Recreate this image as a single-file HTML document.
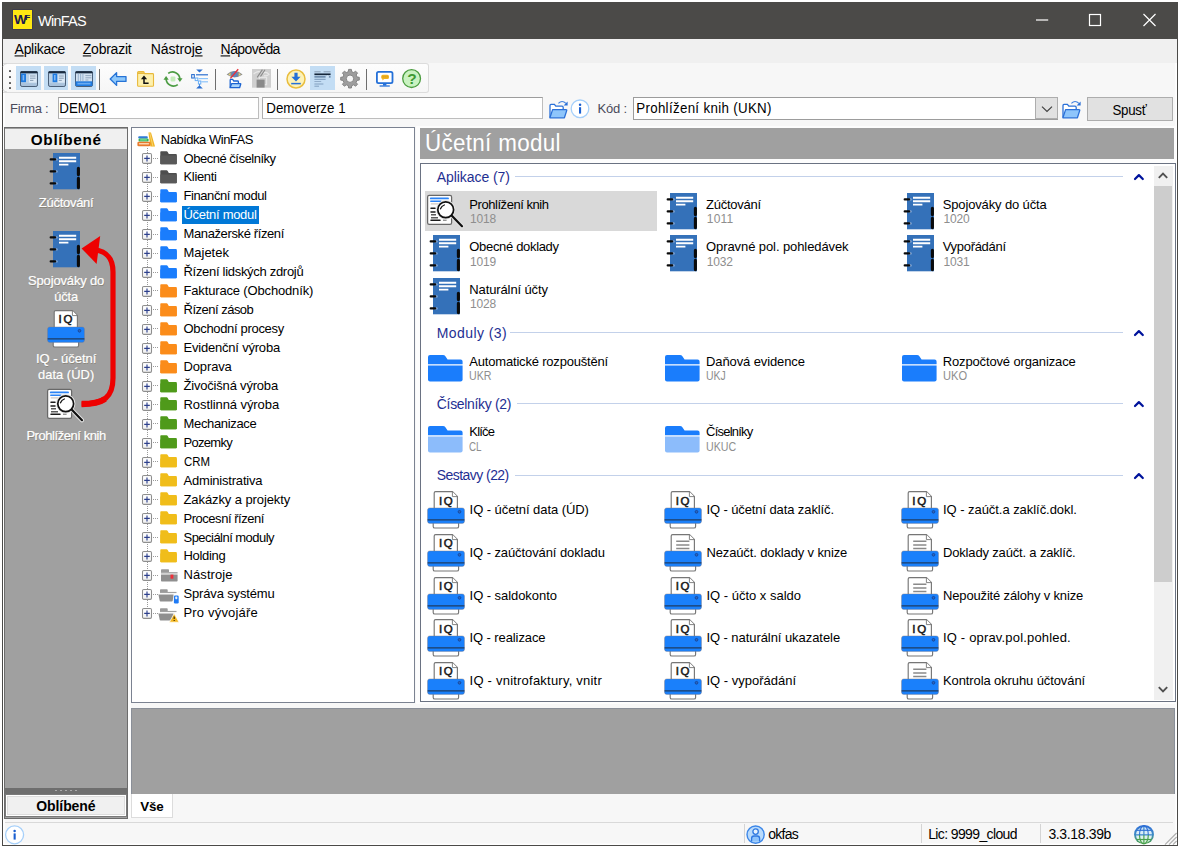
<!DOCTYPE html><html lang="cs"><head><meta charset="utf-8"><title>WinFAS</title><style>
*{box-sizing:border-box}
html,body{margin:0;padding:0}
body{width:1181px;height:849px;background:#fff;overflow:hidden;position:relative;
 font-family:"Liberation Sans",sans-serif;font-size:13px;letter-spacing:-0.35px;color:#000}
.a{position:absolute}
.t{position:absolute;white-space:nowrap;line-height:16px}
svg{position:absolute;overflow:visible}
</style></head><body>
<div class="a" style="left:2px;top:2px;width:1176px;height:844px;background:#f7f7f7;border:1.2px solid #4b4a48;box-shadow:inset 0 0 0 1.6px #fff;"></div>
<div class="a" style="left:2px;top:2px;width:1176px;height:36.5px;background:#4b4a48;"></div>
<div class="a" style="left:12.5px;top:10px;width:19.6px;height:19.4px;background:#ffe812;box-shadow:0 0 0 0.8px rgba(40,38,90,0.4);"></div>
<div class="t" style="left:13.9px;top:13.4px;font-weight:bold;font-size:13.2px;letter-spacing:-0.9px;color:#1c1a4e;line-height:15px;transform-origin:0 0;transform:scale(1.04,0.95)">W<span style="font-size:8.2px;position:relative;top:-4.7px;margin-left:-0.9px;letter-spacing:0">F</span></div>
<div class="t" style="left:38px;top:11.2px;color:#fff;font-size:14.5px;line-height:20px;letter-spacing:-0.75px">WinFAS</div>
<svg style="left:1030px;top:8px" width="140" height="24" viewBox="0 0 140 24"><g stroke="#fff" stroke-width="1.2" fill="none"><path d="M6 12h12.2"/><rect x="59.5" y="6.5" width="11" height="11"/><path d="M113.5 6l12 12M125.5 6l-12 12"/></g></svg>
<div class="a" style="left:3px;top:38.5px;width:1174px;height:24px;background:#f0f0f0;"></div>
<div class="t" style="left:14.6px;top:40.6px;font-size:14px;line-height:17px;transform:scaleY(1.07);letter-spacing:-0.304px;word-spacing:0;"><u>A</u>plikace</div>
<div class="t" style="left:82.8px;top:40.6px;font-size:14px;line-height:17px;transform:scaleY(1.07);letter-spacing:-0.240px;word-spacing:0;"><u>Z</u>obrazit</div>
<div class="t" style="left:150.8px;top:40.6px;font-size:14px;line-height:17px;transform:scaleY(1.07);letter-spacing:-0.049px;word-spacing:0;">Nástro<u>j</u><u>e</u></div>
<div class="t" style="left:220.6px;top:40.6px;font-size:14px;line-height:17px;transform:scaleY(1.07);letter-spacing:-0.577px;word-spacing:0;"><u>N</u>ápověda</div>
<div class="a" style="left:3px;top:63px;width:426px;height:29.5px;background:linear-gradient(#fdfdfd,#f6f6f6);border:1px solid #dcdcdc;border-left:none;border-radius:0 3px 3px 0;"></div>
<svg style="left:3px;top:63px" width="6" height="30" viewBox="0 0 6 30"><path d="M0 3.5Q0.5 0.5 4 0.5M0 26Q0.5 29 4 29" stroke="#d6d6d6" fill="none"/></svg>
<div class="a" style="left:9.3px;top:69.8px;width:2.2px;height:2.2px;background:#5a5a5a;border-radius:0.6px"></div>
<div class="a" style="left:9.3px;top:75.8px;width:2.2px;height:2.2px;background:#5a5a5a;border-radius:0.6px"></div>
<div class="a" style="left:9.3px;top:81.8px;width:2.2px;height:2.2px;background:#5a5a5a;border-radius:0.6px"></div>
<div class="a" style="left:9.3px;top:87.3px;width:2.2px;height:2.2px;background:#5a5a5a;border-radius:0.6px"></div>
<div class="a" style="left:16.3px;top:66px;width:24.7px;height:23.5px;background:#c3ddf4;"></div>
<div class="a" style="left:43.8px;top:66px;width:24.4px;height:23.5px;background:#c3ddf4;"></div>
<div class="a" style="left:71px;top:66px;width:24.5px;height:23.5px;background:#c3ddf4;"></div>
<div class="a" style="left:310px;top:66px;width:25px;height:23.5px;background:#c3ddf4;"></div>
<div class="a" style="left:99px;top:68.5px;width:1.1px;height:21px;background:#6e6e6e;"></div>
<div class="a" style="left:215.3px;top:68.5px;width:1.1px;height:21px;background:#6e6e6e;"></div>
<div class="a" style="left:277px;top:68.5px;width:1.1px;height:21px;background:#6e6e6e;"></div>
<div class="a" style="left:366px;top:68.5px;width:1.1px;height:21px;background:#6e6e6e;"></div>
<svg style="left:20.3px;top:71px" width="18" height="16" viewBox="0 0 18 16"><rect x="0.5" y="0.5" width="17" height="15" rx="1.6" fill="#a9c2dc" stroke="#4a5f78" stroke-width="1"/><rect x="0.4" y="0.3" width="17.2" height="2.2" rx="0.8" fill="#1b2c40"/><rect x="1" y="2.6" width="16" height="9.6" fill="#b9d0e6"/><rect x="1" y="2.6" width="5" height="8.6" fill="#1e7ae0"/><rect x="2.6" y="4" width="1.6" height="5.4" fill="#7fb6f3"/><rect x="9" y="3.6" width="7.6" height="8" fill="#dce9f6"/><path d="M10 5h5.6M10 7.2h5.6M10 9.4h3.4" stroke="#7f95ad" stroke-width="0.9"/></svg>
<svg style="left:47.5px;top:71px" width="18" height="16" viewBox="0 0 18 16"><rect x="0.5" y="0.5" width="17" height="15" rx="1.6" fill="#a9c2dc" stroke="#4a5f78" stroke-width="1"/><rect x="0.4" y="0.3" width="17.2" height="2.2" rx="0.8" fill="#1b2c40"/><rect x="1" y="2.6" width="16" height="9.6" fill="#b9d0e6"/><rect x="4.6" y="2.6" width="4.6" height="8.6" fill="#1e7ae0"/><rect x="6" y="4" width="1.6" height="5.4" fill="#7fb6f3"/><rect x="10" y="3.6" width="6.8" height="8" fill="#dce9f6"/><path d="M10.8 5h5M10.8 7.2h5M10.8 9.4h3" stroke="#7f95ad" stroke-width="0.9"/></svg>
<svg style="left:74.6px;top:71px" width="18" height="16" viewBox="0 0 18 16"><rect x="0.5" y="0.5" width="17" height="15" rx="1.6" fill="#a9c2dc" stroke="#4a5f78" stroke-width="1"/><rect x="0.4" y="0.3" width="17.2" height="2.2" rx="0.8" fill="#1b2c40"/><rect x="1" y="2.6" width="16" height="7.6" fill="#d3e2f1"/><path d="M3.3 3v7M5.6 3v7M7.9 3v7" stroke="#9cb6d2" stroke-width="1.1"/><path d="M10.4 4.6h6M10.4 6.8h6M10.4 9h3" stroke="#8aa1ba" stroke-width="0.9"/><rect x="0.6" y="10.4" width="16.8" height="4.6" fill="#1e7ae0"/><rect x="2.4" y="11.8" width="13.2" height="1.7" fill="#69aaf0"/></svg>
<svg style="left:109px;top:71px" width="19" height="16" viewBox="0 0 19 16"><path d="M1.2 8L7.6 1.6V5.6H17V10.4H7.6V14.4Z" fill="#8ec8fb" stroke="#2673d6" stroke-width="1.3" stroke-linejoin="round"/></svg>
<svg style="left:137px;top:70.5px" width="17" height="16" viewBox="0 0 17 16"><path d="M0.6 1.6Q0.6 0.6 1.6 0.6H6Q7 0.6 7.2 1.6L7.4 2.6H15.6Q16.5 2.6 16.5 3.5V14.4Q16.5 15.3 15.6 15.3H1.5Q0.6 15.3 0.6 14.4Z" fill="#fdf0ad" stroke="#e8b93c" stroke-width="1.1"/><path d="M0.6 2.2H7" stroke="#e8b93c" stroke-width="1.6"/><path d="M11.6 12.2H7V7.6" stroke="#111" stroke-width="1.5" fill="none"/><path d="M3.9 8.2L7 4.6L10.1 8.2Z" fill="#111"/></svg>
<svg style="left:163px;top:70px" width="20" height="18" viewBox="0 0 20 18"><g fill="none" stroke="#4c9c43" stroke-width="1.7"><path d="M5.2 3.4A7.4 7.4 0 0 1 16.9 9"/><path d="M14.8 14.6A7.4 7.4 0 0 1 3.1 9"/></g><path d="M14.3 8.2H19.5L16.9 12Z" fill="#4c9c43"/><path d="M0.5 9.8H5.7L3.1 6Z" fill="#4c9c43"/><rect x="7.6" y="6.6" width="4.8" height="4.8" rx="1" fill="#c5edbb"/></svg>
<svg style="left:191px;top:69px" width="18" height="20" viewBox="0 0 18 20"><path d="M5.2 0.6H11.8L8.5 3.6Z" fill="#2b6fd0"/><path d="M5.2 19.6H11.8L8.5 16.2Z" fill="#2b6fd0"/><path d="M5 5.8H17" stroke="#2b6fd0" stroke-width="1.2"/><path d="M7.6 9.6H17" stroke="#8cc4fb" stroke-width="1.2"/><path d="M10.4 12.8H17" stroke="#8cc4fb" stroke-width="1.2"/><path d="M8.5 14.6v2" stroke="#2b6fd0" stroke-width="1"/><rect x="0.7" y="5.6" width="2.6" height="3.4" fill="#fff" stroke="#2b6fd0" stroke-width="1.1"/><rect x="4.2" y="9" width="2.6" height="2.6" fill="#fff" stroke="#69aef6" stroke-width="1"/><rect x="7.4" y="12" width="2.4" height="3" fill="#fff" stroke="#69aef6" stroke-width="1"/></svg>
<svg style="left:225.5px;top:69px" width="18" height="20" viewBox="0 0 18 20"><path d="M0.6 5.4Q8.5 -1.2 16.6 5.4Q8.5 11 0.6 5.4Z" fill="#8d8d8d"/><ellipse cx="8.6" cy="5.2" rx="3.2" ry="3" fill="#5c86bd"/><path d="M2.4 5.4l2-1.6v3.2zM14.8 5.4l-2-1.6v3.2z" fill="#e7d77a"/><path d="M12.2 0.2L4.4 9.4" stroke="#e8313a" stroke-width="1.4"/><path d="M4.2 18.6V11Q4.2 10.4 4.8 10.4H6.6L7.8 12H11.6Q12.4 12 12.4 12.8V14.4" fill="#fff" stroke="#1b63d1" stroke-width="1.3"/><path d="M4.1 18.7L5.6 14.6H14.2Q14.9 14.6 14.7 15.2L13.6 18.7Z" fill="#a9d4fc" stroke="#1b63d1" stroke-width="1.3" stroke-linejoin="round"/></svg>
<svg style="left:252px;top:69.3px" width="19" height="19" viewBox="0 0 19 19"><rect width="19" height="18.7" fill="#cfcfcf"/><path d="M1.6 5Q6 1 9.4 3.6M11 4.4Q14 2 17 5.4Q14.6 7.4 12 6.6" stroke="#e9e9e9" stroke-width="1.1" fill="none"/><path d="M10.4 0.6L5.2 8.4M13 0.8L8.4 7.6" stroke="#8a8a8a" stroke-width="1.1"/><path d="M7.4 10.4V8.4H14.6V15.6H12.6" stroke="#e6e6e6" stroke-width="1.2" fill="none"/><rect x="4.6" y="10.6" width="8" height="8" fill="#8a8a8a"/></svg>
<svg style="left:285.5px;top:68.8px" width="20" height="20" viewBox="0 0 20 20"><circle cx="10" cy="10" r="9" fill="#fdf2b8" stroke="#e9bd3d" stroke-width="1.5"/><path d="M8.4 3.8H11.6V7.8H14.6L10 12.4L5.4 7.8H8.4Z" fill="#2470d8"/><path d="M5.2 14.6H14.8" stroke="#2470d8" stroke-width="1.5"/></svg>
<svg style="left:314.4px;top:71px" width="17" height="16" viewBox="0 0 17 16"><path d="M0.4 0.8H6.6M9.6 0.8H16.6" stroke="#8396ab" stroke-width="0.9"/><path d="M0.4 3.3H16.6" stroke="#14263a" stroke-width="1.7"/><path d="M0.4 5.9H11.6" stroke="#4e6e92" stroke-width="1.2"/><path d="M14.6 5.9H16.6" stroke="#4e6e92" stroke-width="1.2"/><path d="M13.2 4.6L15 6.4" stroke="#dcebf9" stroke-width="1"/><path d="M0.4 8.3H11.6" stroke="#6f8fb2" stroke-width="0.9"/><path d="M0.4 10.5H7.2" stroke="#8ba6c4" stroke-width="0.9"/><path d="M0.4 13H9.4" stroke="#7b9aba" stroke-width="0.9"/><path d="M0.4 15.2H5" stroke="#7b9aba" stroke-width="0.9"/></svg>
<svg style="left:340px;top:69px" width="20" height="20" viewBox="0 0 20 20"><path d="M8.32 2.70L8.60 0.40L11.40 0.40L11.68 2.70L13.76 3.56L15.58 2.14L17.56 4.12L16.14 5.94L17.00 8.02L19.30 8.30L19.30 11.10L17.00 11.38L16.14 13.46L17.56 15.28L15.58 17.26L13.76 15.84L11.68 16.70L11.40 19.00L8.60 19.00L8.32 16.70L6.24 15.84L4.42 17.26L2.44 15.28L3.86 13.46L3.00 11.38L0.70 11.10L0.70 8.30L3.00 8.02L3.86 5.94L2.44 4.12L4.42 2.14L6.24 3.56Z" fill="#9d9d9d" stroke="#7d7d7d" stroke-width="0.9" stroke-linejoin="round"/><circle cx="10" cy="9.7" r="3.7" fill="#f6f6f6" stroke="#7d7d7d" stroke-width="0.9"/></svg>
<svg style="left:376px;top:70.5px" width="18" height="16" viewBox="0 0 18 16"><rect x="0.9" y="0.9" width="15.6" height="11.2" rx="1.6" fill="#fff" stroke="#2470d8" stroke-width="1.8"/><rect x="7" y="12.6" width="3.4" height="2" fill="#2470d8"/><path d="M3.6 15H13.8" stroke="#2470d8" stroke-width="1.3"/><path d="M5.2 5.4Q5.2 3.8 6.8 3.8H11.4Q13 3.8 13 5.4V6.4Q13 8 11.4 8H8.2L6.4 9.6V8Q5.2 7.8 5.2 6.4Z" fill="#f0b323"/><path d="M6.6 5.9h1M8.6 5.9h1M10.6 5.9h1" stroke="#c08a10" stroke-width="0.9"/></svg>
<svg style="left:402px;top:69.4px" width="20" height="20" viewBox="0 0 20 20"><circle cx="9.6" cy="9.6" r="8.9" fill="#c9f2c1" stroke="#4a9c3e" stroke-width="1.3"/></svg>
<div class="t" style="left:407.2px;top:69.6px;font-weight:bold;font-size:15.5px;color:#3f9a33;line-height:18px;letter-spacing:0">?</div>
<div class="t" style="left:10px;top:101px;color:#4a4a5a;font-size:13px;letter-spacing:-0.3px;transform:scaleY(1.05)">Firma :</div>
<div class="a" style="left:58px;top:97px;width:201px;height:21.7px;background:#fff;border:1px solid #bdbdbd;border-top-color:#9d9d9d;border-left-color:#adadad;"></div>
<div class="a" style="left:262px;top:97px;width:281px;height:21.7px;background:#fff;border:1px solid #bdbdbd;border-top-color:#9d9d9d;border-left-color:#adadad;"></div>
<div class="a" style="left:633px;top:96.6px;width:425.4px;height:23px;background:#fff;border:1px solid #9c9c9c;"></div>
<div class="t" style="left:59.3px;top:99.9px;font-size:13.33px;letter-spacing:0;line-height:17px;transform:scaleY(1.04);">DEMO1</div>
<div class="t" style="left:266.3px;top:99.9px;font-size:13.33px;letter-spacing:0;line-height:17px;transform:scaleY(1.04);">Demoverze 1</div>
<div class="t" style="left:636.2px;top:99.9px;font-size:13.33px;letter-spacing:0;line-height:17px;transform:scaleY(1.04);letter-spacing:0.32px">Prohlížení knih (UKN)</div>
<div class="t" style="left:597.5px;top:101px;color:#4a4a5a;font-size:13px;letter-spacing:-0.2px;transform:scaleY(1.05)">Kód :</div>
<svg style="left:549px;top:99.5px" width="20" height="19" viewBox="0 0 20 19"><path d="M1 17.6V5.4Q1 4.4 2 4.4H5.4L6.8 6.2H13Q14.2 6.2 14.2 7.4V9" fill="#fff" stroke="#2a70d8" stroke-width="1.3"/><path d="M0.9 17.8L3.6 9.6H17Q18 9.6 17.7 10.6L15.4 17.8Z" fill="#8ec5fb" stroke="#2a70d8" stroke-width="1.3" stroke-linejoin="round"/><path d="M9.4 3.4Q13 -0.4 17 3.4" fill="none" stroke="#3f80de" stroke-width="1.1"/><path d="M18.6 1.4V5.6H14.6Z" fill="#2a70d8"/></svg>
<svg style="left:1062.4px;top:99.5px" width="20" height="19" viewBox="0 0 20 19"><path d="M1 17.6V5.4Q1 4.4 2 4.4H5.4L6.8 6.2H13Q14.2 6.2 14.2 7.4V9" fill="#fff" stroke="#2a70d8" stroke-width="1.3"/><path d="M0.9 17.8L3.6 9.6H17Q18 9.6 17.7 10.6L15.4 17.8Z" fill="#8ec5fb" stroke="#2a70d8" stroke-width="1.3" stroke-linejoin="round"/><path d="M9.4 3.4Q13 -0.4 17 3.4" fill="none" stroke="#3f80de" stroke-width="1.1"/><path d="M18.6 1.4V5.6H14.6Z" fill="#2a70d8"/></svg>
<svg style="left:570px;top:99.3px" width="20" height="20" viewBox="0 0 20 20"><circle cx="10" cy="9.8" r="8.8" fill="#fff" stroke="#a6d0fa" stroke-width="1.3"/><rect x="9" y="8.2" width="2.1" height="6.4" fill="#1a5fd0"/><circle cx="10.05" cy="5.7" r="1.25" fill="#1a5fd0"/></svg>
<div class="a" style="left:1035.3px;top:97.2px;width:22.5px;height:21.8px;background:#e1e1e1;border:1px solid #adadad;"></div>
<svg style="left:1039.5px;top:105px" width="14" height="9" viewBox="0 0 14 9"><path d="M2 1.6L7 6.4L12 1.6" fill="none" stroke="#404040" stroke-width="1.2"/></svg>
<div class="a" style="left:1087px;top:97px;width:86.3px;height:24.3px;background:#e1e1e1;border:1px solid #adadad;"></div>
<div class="t" style="left:1112.5px;top:101.7px;font-size:13.33px;letter-spacing:-0.3px;line-height:17px;transform:scaleY(1.05)">Spusť</div>
<div class="a" style="left:4px;top:127px;width:124px;height:691.5px;background:#a0a0a0;border:1.4px solid #6c6c6c;"></div>
<div class="a" style="left:5.4px;top:128.6px;width:121.2px;height:20.2px;background:#f0f0f0;"></div>
<div class="t" style="left:5.8px;top:129.5px;width:121px;text-align:center;font-weight:bold;font-size:15.3px;letter-spacing:0.7px;line-height:19px">Oblíbené</div>
<svg style="left:49px;top:153px" width="31" height="36.3" viewBox="0 0 31 36.3"><rect x="4" y="0" width="27" height="36.3" fill="#3471b9"/><path d="M6.4 6.4H7.6M6.4 18.4H7.6M6.4 30.4H7.6" stroke="#86a9d8" stroke-width="2.4" stroke-linecap="round"/><path d="M1.7 6.4H6.2M1.7 18.4H6.2M1.7 30.4H6.2" stroke="#0a0a0a" stroke-width="2.2" stroke-linecap="round"/><path d="M10 4.7H27.2M10 8.2H27.2M10 11.6H19.4" stroke="#fff" stroke-width="1.9"/><path d="M29.4 15.2V21.6M29.4 25.4V34.6" stroke="#0a0a0a" stroke-width="3.1" stroke-linecap="round"/></svg>
<div class="t" style="left:5.6px;top:195px;width:121px;text-align:center;color:#fff;font-size:13px;letter-spacing:-0.15px;line-height:15.1px;text-shadow:0.6px 0.8px 0 rgba(120,110,90,0.55);-webkit-text-stroke:0.22px #fff;transform:scaleY(1.05)"><span style="letter-spacing:-0.284px;word-spacing:0;">Zúčtování</span></div>
<svg style="left:49px;top:230.6px" width="31" height="36.3" viewBox="0 0 31 36.3"><rect x="4" y="0" width="27" height="36.3" fill="#3471b9"/><path d="M6.4 6.4H7.6M6.4 18.4H7.6M6.4 30.4H7.6" stroke="#86a9d8" stroke-width="2.4" stroke-linecap="round"/><path d="M1.7 6.4H6.2M1.7 18.4H6.2M1.7 30.4H6.2" stroke="#0a0a0a" stroke-width="2.2" stroke-linecap="round"/><path d="M10 4.7H27.2M10 8.2H27.2M10 11.6H19.4" stroke="#fff" stroke-width="1.9"/><path d="M29.4 15.2V21.6M29.4 25.4V34.6" stroke="#0a0a0a" stroke-width="3.1" stroke-linecap="round"/></svg>
<div class="t" style="left:5.6px;top:272.5px;width:121px;text-align:center;color:#fff;font-size:13px;letter-spacing:-0.15px;line-height:15.1px;text-shadow:0.6px 0.8px 0 rgba(120,110,90,0.55);-webkit-text-stroke:0.22px #fff;transform:scaleY(1.05)"><span style="letter-spacing:-0.156px;word-spacing:0;">Spojováky do</span><br><span style="letter-spacing:-0.247px;word-spacing:0;">účta</span></div>
<svg style="left:47px;top:309.6px" width="38" height="37.6" viewBox="0 0 38 37.6"><path d="M7.2 17.5V2Q7.2 0.6 8.6 0.6H25.4L30.4 5.6V17.5Z" fill="#fff" stroke="#767676" stroke-width="1.15"/><path d="M25.4 0.8V5.6H30.2" fill="#fff" stroke="#767676" stroke-width="0.9"/><path d="M6.2 30V35.4Q6.2 37 7.8 37H30Q31.6 37 31.6 35.4V30Z" fill="#fff" stroke="#767676" stroke-width="1.15"/><rect x="0.5" y="16.9" width="37" height="15.5" rx="2.2" fill="#1a80fb" stroke="#8a7a78" stroke-opacity="0.55" stroke-width="0.7"/><path d="M0.6 28.9H37.4" stroke="#1f3c63" stroke-width="1.1"/><circle cx="32.5" cy="20.8" r="1.35" fill="#2a66c4" stroke="#17479a" stroke-width="1"/></svg>
<div class="t" style="left:58.6px;top:312.8px;font-size:11.5px;letter-spacing:1.7px;line-height:13px;color:#1a1a1a;-webkit-text-stroke:0.55px #1a1a1a">IQ</div>
<div class="t" style="left:5.6px;top:351px;width:121px;text-align:center;color:#fff;font-size:13px;letter-spacing:-0.15px;line-height:15.1px;text-shadow:0.6px 0.8px 0 rgba(120,110,90,0.55);-webkit-text-stroke:0.22px #fff;transform:scaleY(1.05)"><span style="letter-spacing:-0.028px;word-spacing:0;">IQ - účetní</span><br><span style="letter-spacing:-0.002px;word-spacing:0;">data (ÚD)</span></div>
<svg style="left:47px;top:388.8px" width="37" height="33" viewBox="0 0 37 33"><rect x="0.6" y="0.4" width="24" height="29" rx="1.6" fill="#fdfdfd" stroke="#686868" stroke-width="1.25"/><path d="M3.8 3.4H21" stroke="#2b83f6" stroke-width="1.9" stroke-linecap="round"/><path d="M3.8 6.2H14" stroke="#2b83f6" stroke-width="1.5" stroke-linecap="round"/><path d="M3.8 8.9H12" stroke="#c9c2bb" stroke-width="1.1"/><path d="M4 13.2H8M4 17H8" stroke="#1c1c1c" stroke-width="1.5" stroke-linecap="round"/><path d="M4 19.8H9M4 22.7H11" stroke="#5a5a5a" stroke-width="1.6"/><path d="M4 25.3H13" stroke="#1c1c1c" stroke-width="1.5" stroke-linecap="round"/><path d="M16 25.2h3.6" stroke="#8a8a8a" stroke-width="1.4"/><path d="M25.4 21.4L35 31.2" stroke="#e4e4e4" stroke-width="4.2" stroke-linecap="round"/><circle cx="18.7" cy="14.7" r="7.9" fill="#fff" stroke="#e4e4e4" stroke-width="3.6"/><circle cx="18.7" cy="14.7" r="7.9" fill="#fff" stroke="#101010" stroke-width="1.7"/><path d="M13.5 13.8Q14.6 10.8 17.4 10" fill="none" stroke="#151515" stroke-width="1.3" stroke-linecap="round"/><path d="M24.6 20.6L35 31.2" stroke="#101010" stroke-width="2.2" stroke-linecap="round"/></svg>
<div class="t" style="left:5.6px;top:428px;width:121px;text-align:center;color:#fff;font-size:13px;letter-spacing:-0.15px;line-height:15.1px;text-shadow:0.6px 0.8px 0 rgba(120,110,90,0.55);-webkit-text-stroke:0.22px #fff;transform:scaleY(1.05)"><span style="letter-spacing:-0.440px;word-spacing:0;">Prohlížení knih</span></div>
<svg style="left:0;top:0" width="140" height="460" viewBox="0 0 140 460"><path d="M81.6 404C104 404 113 397 113 378V272C113 257 106 251 93 249.4" fill="none" stroke="#ee0000" stroke-width="5.2"/><path d="M81.6 404C92 404 100 402.4 105 399" fill="none" stroke="#ee0000" stroke-width="6.3"/><path d="M81.6 248.4L100.2 236L96.6 264Z" fill="#ee0000"/></svg>
<div class="a" style="left:5.4px;top:788px;width:121.2px;height:5.8px;background:#6e6e6e;"></div>
<div class="a" style="left:55.4px;top:789.8px;width:1.6px;height:1.6px;background:#a8a8a8;"></div>
<div class="a" style="left:60.4px;top:789.8px;width:1.6px;height:1.6px;background:#a8a8a8;"></div>
<div class="a" style="left:65.4px;top:789.8px;width:1.6px;height:1.6px;background:#a8a8a8;"></div>
<div class="a" style="left:70.4px;top:789.8px;width:1.6px;height:1.6px;background:#a8a8a8;"></div>
<div class="a" style="left:75.4px;top:789.8px;width:1.6px;height:1.6px;background:#a8a8a8;"></div>
<div class="a" style="left:5.4px;top:793.8px;width:121.2px;height:23.4px;background:#f0f0f0;border:1px solid #7a7a7a;box-shadow:inset 0 0 0 1px #fff, inset 0 0 0 2px #dcdcdc;"></div>
<div class="t" style="left:5.4px;top:797.6px;width:121px;text-align:center;font-weight:bold;font-size:14px;letter-spacing:-0.1px;line-height:17px">Oblíbené</div>
<div class="a" style="left:128px;top:126px;width:3px;height:692px;background:#fcfcfc;"></div>
<div class="a" style="left:131px;top:127.3px;width:284px;height:575.7px;background:#fff;border:1px solid #7b8291;"></div>
<svg style="left:137px;top:132px" width="19" height="15" viewBox="0 0 19 15"><path d="M11.4 0.4H14L18 14.4H13.4Z" fill="#f0b323"/><path d="M12.6 0.4L16 14.4" stroke="#f8d77a" stroke-width="0.9"/><rect x="1.2" y="4.2" width="9.6" height="2.4" rx="1" fill="#2f7bd6"/><rect x="1.6" y="6.4" width="10" height="3.2" rx="1.2" fill="#36b25a"/><rect x="3" y="7.3" width="7" height="1.2" rx="0.6" fill="#7fe39a"/><rect x="0.4" y="9.8" width="13" height="4.4" rx="1.3" fill="#e8792b"/><rect x="1.8" y="11" width="10.4" height="1.5" rx="0.7" fill="#fbd3ae"/></svg>
<div class="t" style="left:160.8px;top:130.6px;font-size:13px;letter-spacing:-0.38px;line-height:17px;transform:scaleY(1.05);letter-spacing:-0.486px;word-spacing:0;">Nabídka WinFAS</div>
<div class="a" style="left:147px;top:148px;width:1px;height:465.0999999999999px;background:repeating-linear-gradient(#9a9a9a 0 1px,transparent 1px 2px);"></div>
<div class="a" style="left:152.5px;top:158px;width:6.5px;height:1px;background:repeating-linear-gradient(90deg,#9a9a9a 0 1px,transparent 1px 2px);"></div>
<svg style="left:141.9px;top:153.30px" width="10" height="10.9" viewBox="0 0 10 10.4" preserveAspectRatio="none"><rect x="0.5" y="0.5" width="9" height="9.4" rx="1.3" fill="#f4f4f4" stroke="#8e8e8e" stroke-width="1.05"/><rect x="1.4" y="1.4" width="7.2" height="3.6" fill="#fdfdfd"/><path d="M2.2 5.2H7.8M5 2.4V8" stroke="#2c3f8c" stroke-width="1.15"/></svg>
<svg style="left:160.2px;top:151.10000000000002px" width="17" height="13.4" viewBox="0 0 17 13.4"><path d="M0.3 1Q0.3 0.2 1.1 0.2H6.6Q7.3 0.2 7.7 0.9L8.8 3H16Q16.8 3 16.8 3.8V12.4Q16.8 13.2 16 13.2H1.1Q0.3 13.2 0.3 12.4Z" fill="#4e4e4e"/><path d="M0.3 4.4H16.8V12.4Q16.8 13.2 16 13.2H1.1Q0.3 13.2 0.3 12.4Z" fill="#595959"/></svg>
<div class="t" style="left:183.5px;top:149.5px;font-size:13px;letter-spacing:-0.38px;line-height:17px;transform:scaleY(1.05);letter-spacing:-0.474px;word-spacing:0;">Obecné číselníky</div>
<div class="a" style="left:152.5px;top:177px;width:6.5px;height:1px;background:repeating-linear-gradient(90deg,#9a9a9a 0 1px,transparent 1px 2px);"></div>
<svg style="left:141.9px;top:172.25px" width="10" height="10.9" viewBox="0 0 10 10.4" preserveAspectRatio="none"><rect x="0.5" y="0.5" width="9" height="9.4" rx="1.3" fill="#f4f4f4" stroke="#8e8e8e" stroke-width="1.05"/><rect x="1.4" y="1.4" width="7.2" height="3.6" fill="#fdfdfd"/><path d="M2.2 5.2H7.8M5 2.4V8" stroke="#2c3f8c" stroke-width="1.15"/></svg>
<svg style="left:160.2px;top:170.05px" width="17" height="13.4" viewBox="0 0 17 13.4"><path d="M0.3 1Q0.3 0.2 1.1 0.2H6.6Q7.3 0.2 7.7 0.9L8.8 3H16Q16.8 3 16.8 3.8V12.4Q16.8 13.2 16 13.2H1.1Q0.3 13.2 0.3 12.4Z" fill="#4e4e4e"/><path d="M0.3 4.4H16.8V12.4Q16.8 13.2 16 13.2H1.1Q0.3 13.2 0.3 12.4Z" fill="#595959"/></svg>
<div class="t" style="left:183.5px;top:168.45px;font-size:13px;letter-spacing:-0.38px;line-height:17px;transform:scaleY(1.05);letter-spacing:-0.337px;word-spacing:0;">Klienti</div>
<div class="a" style="left:152.5px;top:196px;width:6.5px;height:1px;background:repeating-linear-gradient(90deg,#9a9a9a 0 1px,transparent 1px 2px);"></div>
<svg style="left:141.9px;top:191.20px" width="10" height="10.9" viewBox="0 0 10 10.4" preserveAspectRatio="none"><rect x="0.5" y="0.5" width="9" height="9.4" rx="1.3" fill="#f4f4f4" stroke="#8e8e8e" stroke-width="1.05"/><rect x="1.4" y="1.4" width="7.2" height="3.6" fill="#fdfdfd"/><path d="M2.2 5.2H7.8M5 2.4V8" stroke="#2c3f8c" stroke-width="1.15"/></svg>
<svg style="left:160.2px;top:189.00000000000003px" width="17" height="13.4" viewBox="0 0 17 13.4"><path d="M0.3 1Q0.3 0.2 1.1 0.2H6.6Q7.3 0.2 7.7 0.9L8.8 3H16Q16.8 3 16.8 3.8V12.4Q16.8 13.2 16 13.2H1.1Q0.3 13.2 0.3 12.4Z" fill="#1a7dfc"/><path d="M0.3 4.4H16.8V12.4Q16.8 13.2 16 13.2H1.1Q0.3 13.2 0.3 12.4Z" fill="#1a7dfc"/></svg>
<div class="t" style="left:183.5px;top:187.4px;font-size:13px;letter-spacing:-0.38px;line-height:17px;transform:scaleY(1.05);letter-spacing:-0.422px;word-spacing:0;">Finanční modul</div>
<div class="a" style="left:152.5px;top:215px;width:6.5px;height:1px;background:repeating-linear-gradient(90deg,#9a9a9a 0 1px,transparent 1px 2px);"></div>
<svg style="left:141.9px;top:210.15px" width="10" height="10.9" viewBox="0 0 10 10.4" preserveAspectRatio="none"><rect x="0.5" y="0.5" width="9" height="9.4" rx="1.3" fill="#f4f4f4" stroke="#8e8e8e" stroke-width="1.05"/><rect x="1.4" y="1.4" width="7.2" height="3.6" fill="#fdfdfd"/><path d="M2.2 5.2H7.8M5 2.4V8" stroke="#2c3f8c" stroke-width="1.15"/></svg>
<svg style="left:160.2px;top:207.95000000000002px" width="17" height="13.4" viewBox="0 0 17 13.4"><path d="M0.3 1Q0.3 0.2 1.1 0.2H6.6Q7.3 0.2 7.7 0.9L8.8 3H16Q16.8 3 16.8 3.8V12.4Q16.8 13.2 16 13.2H1.1Q0.3 13.2 0.3 12.4Z" fill="#1a7dfc"/><path d="M0.3 4.4H16.8V12.4Q16.8 13.2 16 13.2H1.1Q0.3 13.2 0.3 12.4Z" fill="#1a7dfc"/></svg>
<div class="a" style="left:182px;top:205.85px;width:76.8px;height:18.3px;background:#0078d7;"></div>
<div class="t" style="left:183.5px;top:206.35px;font-size:13px;letter-spacing:-0.38px;line-height:17px;transform:scaleY(1.05);letter-spacing:-0.291px;word-spacing:0;color:#fff">Účetní modul</div>
<div class="a" style="left:152.5px;top:234px;width:6.5px;height:1px;background:repeating-linear-gradient(90deg,#9a9a9a 0 1px,transparent 1px 2px);"></div>
<svg style="left:141.9px;top:229.10px" width="10" height="10.9" viewBox="0 0 10 10.4" preserveAspectRatio="none"><rect x="0.5" y="0.5" width="9" height="9.4" rx="1.3" fill="#f4f4f4" stroke="#8e8e8e" stroke-width="1.05"/><rect x="1.4" y="1.4" width="7.2" height="3.6" fill="#fdfdfd"/><path d="M2.2 5.2H7.8M5 2.4V8" stroke="#2c3f8c" stroke-width="1.15"/></svg>
<svg style="left:160.2px;top:226.90000000000003px" width="17" height="13.4" viewBox="0 0 17 13.4"><path d="M0.3 1Q0.3 0.2 1.1 0.2H6.6Q7.3 0.2 7.7 0.9L8.8 3H16Q16.8 3 16.8 3.8V12.4Q16.8 13.2 16 13.2H1.1Q0.3 13.2 0.3 12.4Z" fill="#1a7dfc"/><path d="M0.3 4.4H16.8V12.4Q16.8 13.2 16 13.2H1.1Q0.3 13.2 0.3 12.4Z" fill="#1a7dfc"/></svg>
<div class="t" style="left:183.5px;top:225.3px;font-size:13px;letter-spacing:-0.38px;line-height:17px;transform:scaleY(1.05);letter-spacing:-0.383px;word-spacing:0;">Manažerské řízení</div>
<div class="a" style="left:152.5px;top:253px;width:6.5px;height:1px;background:repeating-linear-gradient(90deg,#9a9a9a 0 1px,transparent 1px 2px);"></div>
<svg style="left:141.9px;top:248.05px" width="10" height="10.9" viewBox="0 0 10 10.4" preserveAspectRatio="none"><rect x="0.5" y="0.5" width="9" height="9.4" rx="1.3" fill="#f4f4f4" stroke="#8e8e8e" stroke-width="1.05"/><rect x="1.4" y="1.4" width="7.2" height="3.6" fill="#fdfdfd"/><path d="M2.2 5.2H7.8M5 2.4V8" stroke="#2c3f8c" stroke-width="1.15"/></svg>
<svg style="left:160.2px;top:245.85000000000002px" width="17" height="13.4" viewBox="0 0 17 13.4"><path d="M0.3 1Q0.3 0.2 1.1 0.2H6.6Q7.3 0.2 7.7 0.9L8.8 3H16Q16.8 3 16.8 3.8V12.4Q16.8 13.2 16 13.2H1.1Q0.3 13.2 0.3 12.4Z" fill="#1a7dfc"/><path d="M0.3 4.4H16.8V12.4Q16.8 13.2 16 13.2H1.1Q0.3 13.2 0.3 12.4Z" fill="#1a7dfc"/></svg>
<div class="t" style="left:183.5px;top:244.25px;font-size:13px;letter-spacing:-0.38px;line-height:17px;transform:scaleY(1.05);letter-spacing:-0.020px;word-spacing:0;">Majetek</div>
<div class="a" style="left:152.5px;top:272px;width:6.5px;height:1px;background:repeating-linear-gradient(90deg,#9a9a9a 0 1px,transparent 1px 2px);"></div>
<svg style="left:141.9px;top:267.00px" width="10" height="10.9" viewBox="0 0 10 10.4" preserveAspectRatio="none"><rect x="0.5" y="0.5" width="9" height="9.4" rx="1.3" fill="#f4f4f4" stroke="#8e8e8e" stroke-width="1.05"/><rect x="1.4" y="1.4" width="7.2" height="3.6" fill="#fdfdfd"/><path d="M2.2 5.2H7.8M5 2.4V8" stroke="#2c3f8c" stroke-width="1.15"/></svg>
<svg style="left:160.2px;top:264.8px" width="17" height="13.4" viewBox="0 0 17 13.4"><path d="M0.3 1Q0.3 0.2 1.1 0.2H6.6Q7.3 0.2 7.7 0.9L8.8 3H16Q16.8 3 16.8 3.8V12.4Q16.8 13.2 16 13.2H1.1Q0.3 13.2 0.3 12.4Z" fill="#1a7dfc"/><path d="M0.3 4.4H16.8V12.4Q16.8 13.2 16 13.2H1.1Q0.3 13.2 0.3 12.4Z" fill="#1a7dfc"/></svg>
<div class="t" style="left:183.5px;top:263.2px;font-size:13px;letter-spacing:-0.38px;line-height:17px;transform:scaleY(1.05);letter-spacing:-0.300px;word-spacing:0;">Řízení lidských zdrojů</div>
<div class="a" style="left:152.5px;top:290px;width:6.5px;height:1px;background:repeating-linear-gradient(90deg,#9a9a9a 0 1px,transparent 1px 2px);"></div>
<svg style="left:141.9px;top:285.95px" width="10" height="10.9" viewBox="0 0 10 10.4" preserveAspectRatio="none"><rect x="0.5" y="0.5" width="9" height="9.4" rx="1.3" fill="#f4f4f4" stroke="#8e8e8e" stroke-width="1.05"/><rect x="1.4" y="1.4" width="7.2" height="3.6" fill="#fdfdfd"/><path d="M2.2 5.2H7.8M5 2.4V8" stroke="#2c3f8c" stroke-width="1.15"/></svg>
<svg style="left:160.2px;top:283.75000000000006px" width="17" height="13.4" viewBox="0 0 17 13.4"><path d="M0.3 1Q0.3 0.2 1.1 0.2H6.6Q7.3 0.2 7.7 0.9L8.8 3H16Q16.8 3 16.8 3.8V12.4Q16.8 13.2 16 13.2H1.1Q0.3 13.2 0.3 12.4Z" fill="#fb8c1a"/><path d="M0.3 4.4H16.8V12.4Q16.8 13.2 16 13.2H1.1Q0.3 13.2 0.3 12.4Z" fill="#fb8c1a"/></svg>
<div class="t" style="left:183.5px;top:282.15000000000003px;font-size:13px;letter-spacing:-0.38px;line-height:17px;transform:scaleY(1.05);letter-spacing:-0.156px;word-spacing:0;">Fakturace (Obchodník)</div>
<div class="a" style="left:152.5px;top:309px;width:6.5px;height:1px;background:repeating-linear-gradient(90deg,#9a9a9a 0 1px,transparent 1px 2px);"></div>
<svg style="left:141.9px;top:304.90px" width="10" height="10.9" viewBox="0 0 10 10.4" preserveAspectRatio="none"><rect x="0.5" y="0.5" width="9" height="9.4" rx="1.3" fill="#f4f4f4" stroke="#8e8e8e" stroke-width="1.05"/><rect x="1.4" y="1.4" width="7.2" height="3.6" fill="#fdfdfd"/><path d="M2.2 5.2H7.8M5 2.4V8" stroke="#2c3f8c" stroke-width="1.15"/></svg>
<svg style="left:160.2px;top:302.7px" width="17" height="13.4" viewBox="0 0 17 13.4"><path d="M0.3 1Q0.3 0.2 1.1 0.2H6.6Q7.3 0.2 7.7 0.9L8.8 3H16Q16.8 3 16.8 3.8V12.4Q16.8 13.2 16 13.2H1.1Q0.3 13.2 0.3 12.4Z" fill="#fb8c1a"/><path d="M0.3 4.4H16.8V12.4Q16.8 13.2 16 13.2H1.1Q0.3 13.2 0.3 12.4Z" fill="#fb8c1a"/></svg>
<div class="t" style="left:183.5px;top:301.09999999999997px;font-size:13px;letter-spacing:-0.38px;line-height:17px;transform:scaleY(1.05);letter-spacing:-0.504px;word-spacing:0;">Řízení zásob</div>
<div class="a" style="left:152.5px;top:328px;width:6.5px;height:1px;background:repeating-linear-gradient(90deg,#9a9a9a 0 1px,transparent 1px 2px);"></div>
<svg style="left:141.9px;top:323.85px" width="10" height="10.9" viewBox="0 0 10 10.4" preserveAspectRatio="none"><rect x="0.5" y="0.5" width="9" height="9.4" rx="1.3" fill="#f4f4f4" stroke="#8e8e8e" stroke-width="1.05"/><rect x="1.4" y="1.4" width="7.2" height="3.6" fill="#fdfdfd"/><path d="M2.2 5.2H7.8M5 2.4V8" stroke="#2c3f8c" stroke-width="1.15"/></svg>
<svg style="left:160.2px;top:321.65000000000003px" width="17" height="13.4" viewBox="0 0 17 13.4"><path d="M0.3 1Q0.3 0.2 1.1 0.2H6.6Q7.3 0.2 7.7 0.9L8.8 3H16Q16.8 3 16.8 3.8V12.4Q16.8 13.2 16 13.2H1.1Q0.3 13.2 0.3 12.4Z" fill="#fb8c1a"/><path d="M0.3 4.4H16.8V12.4Q16.8 13.2 16 13.2H1.1Q0.3 13.2 0.3 12.4Z" fill="#fb8c1a"/></svg>
<div class="t" style="left:183.5px;top:320.05px;font-size:13px;letter-spacing:-0.38px;line-height:17px;transform:scaleY(1.05);letter-spacing:-0.320px;word-spacing:0;">Obchodní procesy</div>
<div class="a" style="left:152.5px;top:347px;width:6.5px;height:1px;background:repeating-linear-gradient(90deg,#9a9a9a 0 1px,transparent 1px 2px);"></div>
<svg style="left:141.9px;top:342.80px" width="10" height="10.9" viewBox="0 0 10 10.4" preserveAspectRatio="none"><rect x="0.5" y="0.5" width="9" height="9.4" rx="1.3" fill="#f4f4f4" stroke="#8e8e8e" stroke-width="1.05"/><rect x="1.4" y="1.4" width="7.2" height="3.6" fill="#fdfdfd"/><path d="M2.2 5.2H7.8M5 2.4V8" stroke="#2c3f8c" stroke-width="1.15"/></svg>
<svg style="left:160.2px;top:340.6px" width="17" height="13.4" viewBox="0 0 17 13.4"><path d="M0.3 1Q0.3 0.2 1.1 0.2H6.6Q7.3 0.2 7.7 0.9L8.8 3H16Q16.8 3 16.8 3.8V12.4Q16.8 13.2 16 13.2H1.1Q0.3 13.2 0.3 12.4Z" fill="#fb8c1a"/><path d="M0.3 4.4H16.8V12.4Q16.8 13.2 16 13.2H1.1Q0.3 13.2 0.3 12.4Z" fill="#fb8c1a"/></svg>
<div class="t" style="left:183.5px;top:339.0px;font-size:13px;letter-spacing:-0.38px;line-height:17px;transform:scaleY(1.05);letter-spacing:-0.206px;word-spacing:0;">Evidenční výroba</div>
<div class="a" style="left:152.5px;top:366px;width:6.5px;height:1px;background:repeating-linear-gradient(90deg,#9a9a9a 0 1px,transparent 1px 2px);"></div>
<svg style="left:141.9px;top:361.75px" width="10" height="10.9" viewBox="0 0 10 10.4" preserveAspectRatio="none"><rect x="0.5" y="0.5" width="9" height="9.4" rx="1.3" fill="#f4f4f4" stroke="#8e8e8e" stroke-width="1.05"/><rect x="1.4" y="1.4" width="7.2" height="3.6" fill="#fdfdfd"/><path d="M2.2 5.2H7.8M5 2.4V8" stroke="#2c3f8c" stroke-width="1.15"/></svg>
<svg style="left:160.2px;top:359.55px" width="17" height="13.4" viewBox="0 0 17 13.4"><path d="M0.3 1Q0.3 0.2 1.1 0.2H6.6Q7.3 0.2 7.7 0.9L8.8 3H16Q16.8 3 16.8 3.8V12.4Q16.8 13.2 16 13.2H1.1Q0.3 13.2 0.3 12.4Z" fill="#fb8c1a"/><path d="M0.3 4.4H16.8V12.4Q16.8 13.2 16 13.2H1.1Q0.3 13.2 0.3 12.4Z" fill="#fb8c1a"/></svg>
<div class="t" style="left:183.5px;top:357.95px;font-size:13px;letter-spacing:-0.38px;line-height:17px;transform:scaleY(1.05);letter-spacing:-0.135px;word-spacing:0;">Doprava</div>
<div class="a" style="left:152.5px;top:385px;width:6.5px;height:1px;background:repeating-linear-gradient(90deg,#9a9a9a 0 1px,transparent 1px 2px);"></div>
<svg style="left:141.9px;top:380.70px" width="10" height="10.9" viewBox="0 0 10 10.4" preserveAspectRatio="none"><rect x="0.5" y="0.5" width="9" height="9.4" rx="1.3" fill="#f4f4f4" stroke="#8e8e8e" stroke-width="1.05"/><rect x="1.4" y="1.4" width="7.2" height="3.6" fill="#fdfdfd"/><path d="M2.2 5.2H7.8M5 2.4V8" stroke="#2c3f8c" stroke-width="1.15"/></svg>
<svg style="left:160.2px;top:378.5px" width="17" height="13.4" viewBox="0 0 17 13.4"><path d="M0.3 1Q0.3 0.2 1.1 0.2H6.6Q7.3 0.2 7.7 0.9L8.8 3H16Q16.8 3 16.8 3.8V12.4Q16.8 13.2 16 13.2H1.1Q0.3 13.2 0.3 12.4Z" fill="#4f9a1a"/><path d="M0.3 4.4H16.8V12.4Q16.8 13.2 16 13.2H1.1Q0.3 13.2 0.3 12.4Z" fill="#4f9a1a"/></svg>
<div class="t" style="left:183.5px;top:376.9px;font-size:13px;letter-spacing:-0.38px;line-height:17px;transform:scaleY(1.05);letter-spacing:-0.194px;word-spacing:0;">Živočišná výroba</div>
<div class="a" style="left:152.5px;top:404px;width:6.5px;height:1px;background:repeating-linear-gradient(90deg,#9a9a9a 0 1px,transparent 1px 2px);"></div>
<svg style="left:141.9px;top:399.65px" width="10" height="10.9" viewBox="0 0 10 10.4" preserveAspectRatio="none"><rect x="0.5" y="0.5" width="9" height="9.4" rx="1.3" fill="#f4f4f4" stroke="#8e8e8e" stroke-width="1.05"/><rect x="1.4" y="1.4" width="7.2" height="3.6" fill="#fdfdfd"/><path d="M2.2 5.2H7.8M5 2.4V8" stroke="#2c3f8c" stroke-width="1.15"/></svg>
<svg style="left:160.2px;top:397.45px" width="17" height="13.4" viewBox="0 0 17 13.4"><path d="M0.3 1Q0.3 0.2 1.1 0.2H6.6Q7.3 0.2 7.7 0.9L8.8 3H16Q16.8 3 16.8 3.8V12.4Q16.8 13.2 16 13.2H1.1Q0.3 13.2 0.3 12.4Z" fill="#4f9a1a"/><path d="M0.3 4.4H16.8V12.4Q16.8 13.2 16 13.2H1.1Q0.3 13.2 0.3 12.4Z" fill="#4f9a1a"/></svg>
<div class="t" style="left:183.5px;top:395.84999999999997px;font-size:13px;letter-spacing:-0.38px;line-height:17px;transform:scaleY(1.05);letter-spacing:-0.080px;word-spacing:0;">Rostlinná výroba</div>
<div class="a" style="left:152.5px;top:423px;width:6.5px;height:1px;background:repeating-linear-gradient(90deg,#9a9a9a 0 1px,transparent 1px 2px);"></div>
<svg style="left:141.9px;top:418.60px" width="10" height="10.9" viewBox="0 0 10 10.4" preserveAspectRatio="none"><rect x="0.5" y="0.5" width="9" height="9.4" rx="1.3" fill="#f4f4f4" stroke="#8e8e8e" stroke-width="1.05"/><rect x="1.4" y="1.4" width="7.2" height="3.6" fill="#fdfdfd"/><path d="M2.2 5.2H7.8M5 2.4V8" stroke="#2c3f8c" stroke-width="1.15"/></svg>
<svg style="left:160.2px;top:416.40000000000003px" width="17" height="13.4" viewBox="0 0 17 13.4"><path d="M0.3 1Q0.3 0.2 1.1 0.2H6.6Q7.3 0.2 7.7 0.9L8.8 3H16Q16.8 3 16.8 3.8V12.4Q16.8 13.2 16 13.2H1.1Q0.3 13.2 0.3 12.4Z" fill="#4f9a1a"/><path d="M0.3 4.4H16.8V12.4Q16.8 13.2 16 13.2H1.1Q0.3 13.2 0.3 12.4Z" fill="#4f9a1a"/></svg>
<div class="t" style="left:183.5px;top:414.8px;font-size:13px;letter-spacing:-0.38px;line-height:17px;transform:scaleY(1.05);letter-spacing:-0.337px;word-spacing:0;">Mechanizace</div>
<div class="a" style="left:152.5px;top:442px;width:6.5px;height:1px;background:repeating-linear-gradient(90deg,#9a9a9a 0 1px,transparent 1px 2px);"></div>
<svg style="left:141.9px;top:437.55px" width="10" height="10.9" viewBox="0 0 10 10.4" preserveAspectRatio="none"><rect x="0.5" y="0.5" width="9" height="9.4" rx="1.3" fill="#f4f4f4" stroke="#8e8e8e" stroke-width="1.05"/><rect x="1.4" y="1.4" width="7.2" height="3.6" fill="#fdfdfd"/><path d="M2.2 5.2H7.8M5 2.4V8" stroke="#2c3f8c" stroke-width="1.15"/></svg>
<svg style="left:160.2px;top:435.35px" width="17" height="13.4" viewBox="0 0 17 13.4"><path d="M0.3 1Q0.3 0.2 1.1 0.2H6.6Q7.3 0.2 7.7 0.9L8.8 3H16Q16.8 3 16.8 3.8V12.4Q16.8 13.2 16 13.2H1.1Q0.3 13.2 0.3 12.4Z" fill="#4f9a1a"/><path d="M0.3 4.4H16.8V12.4Q16.8 13.2 16 13.2H1.1Q0.3 13.2 0.3 12.4Z" fill="#4f9a1a"/></svg>
<div class="t" style="left:183.5px;top:433.75px;font-size:13px;letter-spacing:-0.38px;line-height:17px;transform:scaleY(1.05);letter-spacing:-0.710px;word-spacing:0;">Pozemky</div>
<div class="a" style="left:152.5px;top:461px;width:6.5px;height:1px;background:repeating-linear-gradient(90deg,#9a9a9a 0 1px,transparent 1px 2px);"></div>
<svg style="left:141.9px;top:456.50px" width="10" height="10.9" viewBox="0 0 10 10.4" preserveAspectRatio="none"><rect x="0.5" y="0.5" width="9" height="9.4" rx="1.3" fill="#f4f4f4" stroke="#8e8e8e" stroke-width="1.05"/><rect x="1.4" y="1.4" width="7.2" height="3.6" fill="#fdfdfd"/><path d="M2.2 5.2H7.8M5 2.4V8" stroke="#2c3f8c" stroke-width="1.15"/></svg>
<svg style="left:160.2px;top:454.3px" width="17" height="13.4" viewBox="0 0 17 13.4"><path d="M0.3 1Q0.3 0.2 1.1 0.2H6.6Q7.3 0.2 7.7 0.9L8.8 3H16Q16.8 3 16.8 3.8V12.4Q16.8 13.2 16 13.2H1.1Q0.3 13.2 0.3 12.4Z" fill="#f0bd1a"/><path d="M0.3 4.4H16.8V12.4Q16.8 13.2 16 13.2H1.1Q0.3 13.2 0.3 12.4Z" fill="#f0bd1a"/></svg>
<div class="t" style="left:183.5px;top:452.7px;font-size:13px;letter-spacing:-0.38px;line-height:17px;transform:scaleY(1.05);letter-spacing:0;word-spacing:0;transform-origin:0 50%;transform:scale(0.879,1.05);">CRM</div>
<div class="a" style="left:152.5px;top:480px;width:6.5px;height:1px;background:repeating-linear-gradient(90deg,#9a9a9a 0 1px,transparent 1px 2px);"></div>
<svg style="left:141.9px;top:475.45px" width="10" height="10.9" viewBox="0 0 10 10.4" preserveAspectRatio="none"><rect x="0.5" y="0.5" width="9" height="9.4" rx="1.3" fill="#f4f4f4" stroke="#8e8e8e" stroke-width="1.05"/><rect x="1.4" y="1.4" width="7.2" height="3.6" fill="#fdfdfd"/><path d="M2.2 5.2H7.8M5 2.4V8" stroke="#2c3f8c" stroke-width="1.15"/></svg>
<svg style="left:160.2px;top:473.25px" width="17" height="13.4" viewBox="0 0 17 13.4"><path d="M0.3 1Q0.3 0.2 1.1 0.2H6.6Q7.3 0.2 7.7 0.9L8.8 3H16Q16.8 3 16.8 3.8V12.4Q16.8 13.2 16 13.2H1.1Q0.3 13.2 0.3 12.4Z" fill="#f0bd1a"/><path d="M0.3 4.4H16.8V12.4Q16.8 13.2 16 13.2H1.1Q0.3 13.2 0.3 12.4Z" fill="#f0bd1a"/></svg>
<div class="t" style="left:183.5px;top:471.65px;font-size:13px;letter-spacing:-0.38px;line-height:17px;transform:scaleY(1.05);letter-spacing:-0.201px;word-spacing:0;">Administrativa</div>
<div class="a" style="left:152.5px;top:499px;width:6.5px;height:1px;background:repeating-linear-gradient(90deg,#9a9a9a 0 1px,transparent 1px 2px);"></div>
<svg style="left:141.9px;top:494.40px" width="10" height="10.9" viewBox="0 0 10 10.4" preserveAspectRatio="none"><rect x="0.5" y="0.5" width="9" height="9.4" rx="1.3" fill="#f4f4f4" stroke="#8e8e8e" stroke-width="1.05"/><rect x="1.4" y="1.4" width="7.2" height="3.6" fill="#fdfdfd"/><path d="M2.2 5.2H7.8M5 2.4V8" stroke="#2c3f8c" stroke-width="1.15"/></svg>
<svg style="left:160.2px;top:492.2px" width="17" height="13.4" viewBox="0 0 17 13.4"><path d="M0.3 1Q0.3 0.2 1.1 0.2H6.6Q7.3 0.2 7.7 0.9L8.8 3H16Q16.8 3 16.8 3.8V12.4Q16.8 13.2 16 13.2H1.1Q0.3 13.2 0.3 12.4Z" fill="#f0bd1a"/><path d="M0.3 4.4H16.8V12.4Q16.8 13.2 16 13.2H1.1Q0.3 13.2 0.3 12.4Z" fill="#f0bd1a"/></svg>
<div class="t" style="left:183.5px;top:490.59999999999997px;font-size:13px;letter-spacing:-0.38px;line-height:17px;transform:scaleY(1.05);letter-spacing:-0.093px;word-spacing:0;">Zakázky a projekty</div>
<div class="a" style="left:152.5px;top:518px;width:6.5px;height:1px;background:repeating-linear-gradient(90deg,#9a9a9a 0 1px,transparent 1px 2px);"></div>
<svg style="left:141.9px;top:513.35px" width="10" height="10.9" viewBox="0 0 10 10.4" preserveAspectRatio="none"><rect x="0.5" y="0.5" width="9" height="9.4" rx="1.3" fill="#f4f4f4" stroke="#8e8e8e" stroke-width="1.05"/><rect x="1.4" y="1.4" width="7.2" height="3.6" fill="#fdfdfd"/><path d="M2.2 5.2H7.8M5 2.4V8" stroke="#2c3f8c" stroke-width="1.15"/></svg>
<svg style="left:160.2px;top:511.15000000000003px" width="17" height="13.4" viewBox="0 0 17 13.4"><path d="M0.3 1Q0.3 0.2 1.1 0.2H6.6Q7.3 0.2 7.7 0.9L8.8 3H16Q16.8 3 16.8 3.8V12.4Q16.8 13.2 16 13.2H1.1Q0.3 13.2 0.3 12.4Z" fill="#f0bd1a"/><path d="M0.3 4.4H16.8V12.4Q16.8 13.2 16 13.2H1.1Q0.3 13.2 0.3 12.4Z" fill="#f0bd1a"/></svg>
<div class="t" style="left:183.5px;top:509.55px;font-size:13px;letter-spacing:-0.38px;line-height:17px;transform:scaleY(1.05);letter-spacing:-0.472px;word-spacing:0;">Procesní řízení</div>
<div class="a" style="left:152.5px;top:537px;width:6.5px;height:1px;background:repeating-linear-gradient(90deg,#9a9a9a 0 1px,transparent 1px 2px);"></div>
<svg style="left:141.9px;top:532.30px" width="10" height="10.9" viewBox="0 0 10 10.4" preserveAspectRatio="none"><rect x="0.5" y="0.5" width="9" height="9.4" rx="1.3" fill="#f4f4f4" stroke="#8e8e8e" stroke-width="1.05"/><rect x="1.4" y="1.4" width="7.2" height="3.6" fill="#fdfdfd"/><path d="M2.2 5.2H7.8M5 2.4V8" stroke="#2c3f8c" stroke-width="1.15"/></svg>
<svg style="left:160.2px;top:530.0999999999999px" width="17" height="13.4" viewBox="0 0 17 13.4"><path d="M0.3 1Q0.3 0.2 1.1 0.2H6.6Q7.3 0.2 7.7 0.9L8.8 3H16Q16.8 3 16.8 3.8V12.4Q16.8 13.2 16 13.2H1.1Q0.3 13.2 0.3 12.4Z" fill="#f0bd1a"/><path d="M0.3 4.4H16.8V12.4Q16.8 13.2 16 13.2H1.1Q0.3 13.2 0.3 12.4Z" fill="#f0bd1a"/></svg>
<div class="t" style="left:183.5px;top:528.5px;font-size:13px;letter-spacing:-0.38px;line-height:17px;transform:scaleY(1.05);letter-spacing:-0.527px;word-spacing:0;">Speciální moduly</div>
<div class="a" style="left:152.5px;top:556px;width:6.5px;height:1px;background:repeating-linear-gradient(90deg,#9a9a9a 0 1px,transparent 1px 2px);"></div>
<svg style="left:141.9px;top:551.25px" width="10" height="10.9" viewBox="0 0 10 10.4" preserveAspectRatio="none"><rect x="0.5" y="0.5" width="9" height="9.4" rx="1.3" fill="#f4f4f4" stroke="#8e8e8e" stroke-width="1.05"/><rect x="1.4" y="1.4" width="7.2" height="3.6" fill="#fdfdfd"/><path d="M2.2 5.2H7.8M5 2.4V8" stroke="#2c3f8c" stroke-width="1.15"/></svg>
<svg style="left:160.2px;top:549.05px" width="17" height="13.4" viewBox="0 0 17 13.4"><path d="M0.3 1Q0.3 0.2 1.1 0.2H6.6Q7.3 0.2 7.7 0.9L8.8 3H16Q16.8 3 16.8 3.8V12.4Q16.8 13.2 16 13.2H1.1Q0.3 13.2 0.3 12.4Z" fill="#f0bd1a"/><path d="M0.3 4.4H16.8V12.4Q16.8 13.2 16 13.2H1.1Q0.3 13.2 0.3 12.4Z" fill="#f0bd1a"/></svg>
<div class="t" style="left:183.5px;top:547.45px;font-size:13px;letter-spacing:-0.38px;line-height:17px;transform:scaleY(1.05);letter-spacing:-0.309px;word-spacing:0;">Holding</div>
<div class="a" style="left:152.5px;top:575px;width:6.5px;height:1px;background:repeating-linear-gradient(90deg,#9a9a9a 0 1px,transparent 1px 2px);"></div>
<svg style="left:141.9px;top:570.20px" width="10" height="10.9" viewBox="0 0 10 10.4" preserveAspectRatio="none"><rect x="0.5" y="0.5" width="9" height="9.4" rx="1.3" fill="#f4f4f4" stroke="#8e8e8e" stroke-width="1.05"/><rect x="1.4" y="1.4" width="7.2" height="3.6" fill="#fdfdfd"/><path d="M2.2 5.2H7.8M5 2.4V8" stroke="#2c3f8c" stroke-width="1.15"/></svg>
<svg style="left:158px;top:567.85px" width="22" height="17" viewBox="0 0 22 17"><path d="M3 2Q3 1.2 3.8 1.2H10.2Q11 1.2 11 2V4.1H3Z" fill="#9a9a9a"/><path d="M3 4.1H19.6V5.5H3Z" fill="#a2a2a2"/><path d="M3 6.5H19.6V12.8Q19.6 13.6 18.8 13.6H3.8Q3 13.6 3 12.8Z" fill="#8f8f8f"/><rect x="12.5" y="6.6" width="2.9" height="4.1" fill="#f0303a"/></svg>
<div class="t" style="left:183.5px;top:566.4000000000001px;font-size:13px;letter-spacing:-0.38px;line-height:17px;transform:scaleY(1.05);letter-spacing:0.089px;word-spacing:0;">Nástroje</div>
<div class="a" style="left:152.5px;top:594px;width:6.5px;height:1px;background:repeating-linear-gradient(90deg,#9a9a9a 0 1px,transparent 1px 2px);"></div>
<svg style="left:141.9px;top:589.15px" width="10" height="10.9" viewBox="0 0 10 10.4" preserveAspectRatio="none"><rect x="0.5" y="0.5" width="9" height="9.4" rx="1.3" fill="#f4f4f4" stroke="#8e8e8e" stroke-width="1.05"/><rect x="1.4" y="1.4" width="7.2" height="3.6" fill="#fdfdfd"/><path d="M2.2 5.2H7.8M5 2.4V8" stroke="#2c3f8c" stroke-width="1.15"/></svg>
<svg style="left:158px;top:586.80px" width="22" height="17" viewBox="0 0 22 17"><path d="M2 3.1Q2 2.3 2.8 2.3H8.9Q9.7 2.3 9.7 3.1V4.9H2Z" fill="#9a9a9a"/><path d="M2 4.9H18.5V6.1H2Z" fill="#a2a2a2"/><path d="M0.4 7.5H15.6L14.7 13.8Q14.6 14.6 13.8 14.6H2.6Q1.8 14.6 1.7 13.8Z" fill="#8f8f8f"/><rect x="15.9" y="8.6" width="4.8" height="7.9" rx="1.2" fill="#1f7bf6"/><rect x="17.3" y="9.6" width="2" height="2.6" rx="0.6" fill="#e6f1fe"/></svg>
<div class="t" style="left:183.5px;top:585.35px;font-size:13px;letter-spacing:-0.38px;line-height:17px;transform:scaleY(1.05);letter-spacing:-0.152px;word-spacing:0;">Správa systému</div>
<div class="a" style="left:152.5px;top:613px;width:6.5px;height:1px;background:repeating-linear-gradient(90deg,#9a9a9a 0 1px,transparent 1px 2px);"></div>
<svg style="left:141.9px;top:608.10px" width="10" height="10.9" viewBox="0 0 10 10.4" preserveAspectRatio="none"><rect x="0.5" y="0.5" width="9" height="9.4" rx="1.3" fill="#f4f4f4" stroke="#8e8e8e" stroke-width="1.05"/><rect x="1.4" y="1.4" width="7.2" height="3.6" fill="#fdfdfd"/><path d="M2.2 5.2H7.8M5 2.4V8" stroke="#2c3f8c" stroke-width="1.15"/></svg>
<svg style="left:158px;top:605.75px" width="22" height="17" viewBox="0 0 22 17"><path d="M2 3.1Q2 2.3 2.8 2.3H8.9Q9.7 2.3 9.7 3.1V4.9H2Z" fill="#9a9a9a"/><path d="M2 4.9H18.5V6.1H2Z" fill="#a2a2a2"/><path d="M0.4 7.5H15.6L14.7 13.8Q14.6 14.6 13.8 14.6H2.6Q1.8 14.6 1.7 13.8Z" fill="#8f8f8f"/><path d="M16.2 7.6L21 16.2H11.4Z" fill="#f5b81f" stroke="#fff" stroke-width="0.7" stroke-linejoin="round"/><path d="M16.2 10.6V13M16.2 14V15" stroke="#4a3200" stroke-width="1.2"/></svg>
<div class="t" style="left:183.5px;top:604.3px;font-size:13px;letter-spacing:-0.38px;line-height:17px;transform:scaleY(1.05);letter-spacing:0.180px;word-spacing:0;">Pro vývojáře</div>
<div class="a" style="left:415.5px;top:126px;width:760px;height:577.5px;background:#fdfdfd;"></div>
<div class="a" style="left:420px;top:127.5px;width:754.3px;height:31.2px;background:#a0a0a0;"></div>
<div class="t" style="left:425.0px;top:131.0px;color:#fff;font-size:22.4px;letter-spacing:0.32px;line-height:26px;transform-origin:0 80%;transform:scaleY(1.08)">Účetní modul</div>
<div class="a" style="left:420px;top:163px;width:755.6px;height:539px;background:#fff;border:1.1px solid #6a7282;"></div>
<div class="a" style="left:1154.2px;top:166px;width:18.6px;height:534px;background:#f0f0f0;"></div>
<div class="a" style="left:1154.2px;top:185.6px;width:17.8px;height:396px;background:#cdcdcd;"></div>
<svg style="left:1158px;top:171.6px" width="10" height="7" viewBox="0 0 10 7"><path d="M0.8 5.8L5 1.6L9.2 5.8" fill="none" stroke="#505050" stroke-width="1.9"/></svg>
<svg style="left:1158px;top:686.4px" width="10" height="7" viewBox="0 0 10 7"><path d="M0.8 1.2L5 5.4L9.2 1.2" fill="none" stroke="#505050" stroke-width="1.9"/></svg>
<div class="t" style="left:436.8px;top:168.8px;color:#1f2f92;font-size:14px;letter-spacing:-0.14px;line-height:17px;transform:scaleY(1.06);letter-spacing:-0.069px;word-spacing:0;">Aplikace (7)</div>
<div class="a" style="left:515px;top:176.1px;width:608.4000000000001px;height:1.1px;background:#c3d1ea;"></div>
<svg style="left:1133.6px;top:173px" width="10" height="7" viewBox="0 0 10 7"><path d="M1 6L4.9 2.1L8.8 6" fill="none" stroke="#00139c" stroke-width="2.2" stroke-linejoin="round" stroke-linecap="round"/></svg>
<div class="t" style="left:436.8px;top:324.8px;color:#1f2f92;font-size:14px;letter-spacing:-0.14px;line-height:17px;transform:scaleY(1.06);letter-spacing:0.415px;word-spacing:0;">Moduly (3)</div>
<div class="a" style="left:510.4px;top:332.1px;width:613.0000000000001px;height:1.1px;background:#c3d1ea;"></div>
<svg style="left:1133.6px;top:329px" width="10" height="7" viewBox="0 0 10 7"><path d="M1 6L4.9 2.1L8.8 6" fill="none" stroke="#00139c" stroke-width="2.2" stroke-linejoin="round" stroke-linecap="round"/></svg>
<div class="t" style="left:436.8px;top:396.1px;color:#1f2f92;font-size:14px;letter-spacing:-0.14px;line-height:17px;transform:scaleY(1.06);letter-spacing:-0.326px;word-spacing:0;">Číselníky (2)</div>
<div class="a" style="left:517.2px;top:403.40000000000003px;width:606.2px;height:1.1px;background:#c3d1ea;"></div>
<svg style="left:1133.6px;top:400.3px" width="10" height="7" viewBox="0 0 10 7"><path d="M1 6L4.9 2.1L8.8 6" fill="none" stroke="#00139c" stroke-width="2.2" stroke-linejoin="round" stroke-linecap="round"/></svg>
<div class="t" style="left:436.8px;top:467.40000000000003px;color:#1f2f92;font-size:14px;letter-spacing:-0.14px;line-height:17px;transform:scaleY(1.06);letter-spacing:-0.557px;word-spacing:0;">Sestavy (22)</div>
<div class="a" style="left:515.4px;top:474.70000000000005px;width:608.0000000000001px;height:1.1px;background:#c3d1ea;"></div>
<svg style="left:1133.6px;top:471.6px" width="10" height="7" viewBox="0 0 10 7"><path d="M1 6L4.9 2.1L8.8 6" fill="none" stroke="#00139c" stroke-width="2.2" stroke-linejoin="round" stroke-linecap="round"/></svg>
<div class="a" style="left:425px;top:191.4px;width:231.8px;height:39.6px;background:#d9d9d9;"></div>
<svg style="left:427.1px;top:195px" width="37" height="33" viewBox="0 0 37 33"><rect x="0.6" y="0.4" width="24" height="29" rx="1.6" fill="#fdfdfd" stroke="#686868" stroke-width="1.25"/><path d="M3.8 3.4H21" stroke="#2b83f6" stroke-width="1.9" stroke-linecap="round"/><path d="M3.8 6.2H14" stroke="#2b83f6" stroke-width="1.5" stroke-linecap="round"/><path d="M3.8 8.9H12" stroke="#c9c2bb" stroke-width="1.1"/><path d="M4 13.2H8M4 17H8" stroke="#1c1c1c" stroke-width="1.5" stroke-linecap="round"/><path d="M4 19.8H9M4 22.7H11" stroke="#5a5a5a" stroke-width="1.6"/><path d="M4 25.3H13" stroke="#1c1c1c" stroke-width="1.5" stroke-linecap="round"/><path d="M16 25.2h3.6" stroke="#8a8a8a" stroke-width="1.4"/><path d="M25.4 21.4L35 31.2" stroke="#e4e4e4" stroke-width="4.2" stroke-linecap="round"/><circle cx="18.7" cy="14.7" r="7.9" fill="#fff" stroke="#e4e4e4" stroke-width="3.6"/><circle cx="18.7" cy="14.7" r="7.9" fill="#fff" stroke="#101010" stroke-width="1.7"/><path d="M13.5 13.8Q14.6 10.8 17.4 10" fill="none" stroke="#151515" stroke-width="1.3" stroke-linecap="round"/><path d="M24.6 20.6L35 31.2" stroke="#101010" stroke-width="2.2" stroke-linecap="round"/></svg>
<div class="t" style="left:469.3px;top:195.70000000000002px;font-size:13px;letter-spacing:-0.24px;word-spacing:0.7px;line-height:17px;transform:scaleY(1.05);letter-spacing:-0.447px;word-spacing:0;">Prohlížení knih</div>
<div class="t" style="left:470px;top:211.10000000000002px;font-size:13px;letter-spacing:-0.24px;word-spacing:0.7px;line-height:17px;transform:scaleY(1.05);color:#8e8e8e;font-size:12px;letter-spacing:-0.174px;word-spacing:0;">1018</div>
<svg style="left:665.9000000000001px;top:193.0px" width="31" height="36.3" viewBox="0 0 31 36.3"><rect x="4" y="0" width="27" height="36.3" fill="#3471b9"/><path d="M6.4 6.4H7.6M6.4 18.4H7.6M6.4 30.4H7.6" stroke="#86a9d8" stroke-width="2.4" stroke-linecap="round"/><path d="M1.7 6.4H6.2M1.7 18.4H6.2M1.7 30.4H6.2" stroke="#0a0a0a" stroke-width="2.2" stroke-linecap="round"/><path d="M10 4.7H27.2M10 8.2H27.2M10 11.6H19.4" stroke="#fff" stroke-width="1.9"/><path d="M29.4 15.2V21.6M29.4 25.4V34.6" stroke="#0a0a0a" stroke-width="3.1" stroke-linecap="round"/></svg>
<div class="t" style="left:706.1px;top:195.70000000000002px;font-size:13px;letter-spacing:-0.24px;word-spacing:0.7px;line-height:17px;transform:scaleY(1.05);letter-spacing:-0.272px;word-spacing:0;">Zúčtování</div>
<div class="t" style="left:706.8px;top:211.10000000000002px;font-size:13px;letter-spacing:-0.24px;word-spacing:0.7px;line-height:17px;transform:scaleY(1.05);color:#8e8e8e;font-size:12px;letter-spacing:0.223px;word-spacing:0;">1011</div>
<svg style="left:902.5px;top:193.0px" width="31" height="36.3" viewBox="0 0 31 36.3"><rect x="4" y="0" width="27" height="36.3" fill="#3471b9"/><path d="M6.4 6.4H7.6M6.4 18.4H7.6M6.4 30.4H7.6" stroke="#86a9d8" stroke-width="2.4" stroke-linecap="round"/><path d="M1.7 6.4H6.2M1.7 18.4H6.2M1.7 30.4H6.2" stroke="#0a0a0a" stroke-width="2.2" stroke-linecap="round"/><path d="M10 4.7H27.2M10 8.2H27.2M10 11.6H19.4" stroke="#fff" stroke-width="1.9"/><path d="M29.4 15.2V21.6M29.4 25.4V34.6" stroke="#0a0a0a" stroke-width="3.1" stroke-linecap="round"/></svg>
<div class="t" style="left:942.7px;top:195.70000000000002px;font-size:13px;letter-spacing:-0.24px;word-spacing:0.7px;line-height:17px;transform:scaleY(1.05);letter-spacing:-0.138px;word-spacing:0;">Spojováky do účta</div>
<div class="t" style="left:943.4px;top:211.10000000000002px;font-size:13px;letter-spacing:-0.24px;word-spacing:0.7px;line-height:17px;transform:scaleY(1.05);color:#8e8e8e;font-size:12px;letter-spacing:-0.174px;word-spacing:0;">1020</div>
<svg style="left:429.1px;top:235.45px" width="31" height="36.3" viewBox="0 0 31 36.3"><rect x="4" y="0" width="27" height="36.3" fill="#3471b9"/><path d="M6.4 6.4H7.6M6.4 18.4H7.6M6.4 30.4H7.6" stroke="#86a9d8" stroke-width="2.4" stroke-linecap="round"/><path d="M1.7 6.4H6.2M1.7 18.4H6.2M1.7 30.4H6.2" stroke="#0a0a0a" stroke-width="2.2" stroke-linecap="round"/><path d="M10 4.7H27.2M10 8.2H27.2M10 11.6H19.4" stroke="#fff" stroke-width="1.9"/><path d="M29.4 15.2V21.6M29.4 25.4V34.6" stroke="#0a0a0a" stroke-width="3.1" stroke-linecap="round"/></svg>
<div class="t" style="left:469.3px;top:238.15px;font-size:13px;letter-spacing:-0.24px;word-spacing:0.7px;line-height:17px;transform:scaleY(1.05);letter-spacing:-0.327px;word-spacing:0;">Obecné doklady</div>
<div class="t" style="left:470px;top:253.55px;font-size:13px;letter-spacing:-0.24px;word-spacing:0.7px;line-height:17px;transform:scaleY(1.05);color:#8e8e8e;font-size:12px;letter-spacing:-0.174px;word-spacing:0;">1019</div>
<svg style="left:665.9000000000001px;top:235.45px" width="31" height="36.3" viewBox="0 0 31 36.3"><rect x="4" y="0" width="27" height="36.3" fill="#3471b9"/><path d="M6.4 6.4H7.6M6.4 18.4H7.6M6.4 30.4H7.6" stroke="#86a9d8" stroke-width="2.4" stroke-linecap="round"/><path d="M1.7 6.4H6.2M1.7 18.4H6.2M1.7 30.4H6.2" stroke="#0a0a0a" stroke-width="2.2" stroke-linecap="round"/><path d="M10 4.7H27.2M10 8.2H27.2M10 11.6H19.4" stroke="#fff" stroke-width="1.9"/><path d="M29.4 15.2V21.6M29.4 25.4V34.6" stroke="#0a0a0a" stroke-width="3.1" stroke-linecap="round"/></svg>
<div class="t" style="left:706.1px;top:238.15px;font-size:13px;letter-spacing:-0.24px;word-spacing:0.7px;line-height:17px;transform:scaleY(1.05);letter-spacing:-0.093px;word-spacing:0;">Opravné pol. pohledávek</div>
<div class="t" style="left:706.8px;top:253.55px;font-size:13px;letter-spacing:-0.24px;word-spacing:0.7px;line-height:17px;transform:scaleY(1.05);color:#8e8e8e;font-size:12px;letter-spacing:-0.174px;word-spacing:0;">1032</div>
<svg style="left:902.5px;top:235.45px" width="31" height="36.3" viewBox="0 0 31 36.3"><rect x="4" y="0" width="27" height="36.3" fill="#3471b9"/><path d="M6.4 6.4H7.6M6.4 18.4H7.6M6.4 30.4H7.6" stroke="#86a9d8" stroke-width="2.4" stroke-linecap="round"/><path d="M1.7 6.4H6.2M1.7 18.4H6.2M1.7 30.4H6.2" stroke="#0a0a0a" stroke-width="2.2" stroke-linecap="round"/><path d="M10 4.7H27.2M10 8.2H27.2M10 11.6H19.4" stroke="#fff" stroke-width="1.9"/><path d="M29.4 15.2V21.6M29.4 25.4V34.6" stroke="#0a0a0a" stroke-width="3.1" stroke-linecap="round"/></svg>
<div class="t" style="left:942.7px;top:238.15px;font-size:13px;letter-spacing:-0.24px;word-spacing:0.7px;line-height:17px;transform:scaleY(1.05);letter-spacing:-0.300px;word-spacing:0;">Vypořádání</div>
<div class="t" style="left:943.4px;top:253.55px;font-size:13px;letter-spacing:-0.24px;word-spacing:0.7px;line-height:17px;transform:scaleY(1.05);color:#8e8e8e;font-size:12px;letter-spacing:-0.174px;word-spacing:0;">1031</div>
<svg style="left:429.1px;top:277.90000000000003px" width="31" height="36.3" viewBox="0 0 31 36.3"><rect x="4" y="0" width="27" height="36.3" fill="#3471b9"/><path d="M6.4 6.4H7.6M6.4 18.4H7.6M6.4 30.4H7.6" stroke="#86a9d8" stroke-width="2.4" stroke-linecap="round"/><path d="M1.7 6.4H6.2M1.7 18.4H6.2M1.7 30.4H6.2" stroke="#0a0a0a" stroke-width="2.2" stroke-linecap="round"/><path d="M10 4.7H27.2M10 8.2H27.2M10 11.6H19.4" stroke="#fff" stroke-width="1.9"/><path d="M29.4 15.2V21.6M29.4 25.4V34.6" stroke="#0a0a0a" stroke-width="3.1" stroke-linecap="round"/></svg>
<div class="t" style="left:469.3px;top:280.6px;font-size:13px;letter-spacing:-0.24px;word-spacing:0.7px;line-height:17px;transform:scaleY(1.05);letter-spacing:-0.116px;word-spacing:0;">Naturální účty</div>
<div class="t" style="left:470px;top:296.00000000000006px;font-size:13px;letter-spacing:-0.24px;word-spacing:0.7px;line-height:17px;transform:scaleY(1.05);color:#8e8e8e;font-size:12px;letter-spacing:-0.174px;word-spacing:0;">1028</div>
<svg style="left:428.2px;top:354.6px" width="34.6" height="26.4" viewBox="0 0 34.6 26.4"><path d="M0 2Q0 0 2 0H15Q16.6 0 17.4 1.2L19.6 4.4H32.6Q34.6 4.4 34.6 6.4V9.2H0Z" fill="#1a7dfc"/><path d="M0 10.4H34.6V24.4Q34.6 26.4 32.6 26.4H2Q0 26.4 0 24.4Z" fill="#1a7dfc"/></svg>
<div class="t" style="left:469.3px;top:352.6px;font-size:13px;letter-spacing:-0.24px;word-spacing:0.7px;line-height:17px;transform:scaleY(1.05);letter-spacing:-0.189px;word-spacing:0;">Automatické rozpouštění</div>
<div class="t" style="left:469.4px;top:367.6px;font-size:13px;letter-spacing:-0.24px;word-spacing:0.7px;line-height:17px;transform:scaleY(1.05);color:#8e8e8e;font-size:12px;letter-spacing:0;word-spacing:0;transform-origin:0 50%;transform:scale(0.888,1.05);">UKR</div>
<svg style="left:665.0px;top:354.6px" width="34.6" height="26.4" viewBox="0 0 34.6 26.4"><path d="M0 2Q0 0 2 0H15Q16.6 0 17.4 1.2L19.6 4.4H32.6Q34.6 4.4 34.6 6.4V9.2H0Z" fill="#1a7dfc"/><path d="M0 10.4H34.6V24.4Q34.6 26.4 32.6 26.4H2Q0 26.4 0 24.4Z" fill="#1a7dfc"/></svg>
<div class="t" style="left:706.1px;top:352.6px;font-size:13px;letter-spacing:-0.24px;word-spacing:0.7px;line-height:17px;transform:scaleY(1.05);letter-spacing:-0.116px;word-spacing:0;">Daňová evidence</div>
<div class="t" style="left:706.2px;top:367.6px;font-size:13px;letter-spacing:-0.24px;word-spacing:0.7px;line-height:17px;transform:scaleY(1.05);color:#8e8e8e;font-size:12px;letter-spacing:0;word-spacing:0;transform-origin:0 50%;transform:scale(0.873,1.05);">UKJ</div>
<svg style="left:901.5999999999999px;top:354.6px" width="34.6" height="26.4" viewBox="0 0 34.6 26.4"><path d="M0 2Q0 0 2 0H15Q16.6 0 17.4 1.2L19.6 4.4H32.6Q34.6 4.4 34.6 6.4V9.2H0Z" fill="#1a7dfc"/><path d="M0 10.4H34.6V24.4Q34.6 26.4 32.6 26.4H2Q0 26.4 0 24.4Z" fill="#1a7dfc"/></svg>
<div class="t" style="left:942.7px;top:352.6px;font-size:13px;letter-spacing:-0.24px;word-spacing:0.7px;line-height:17px;transform:scaleY(1.05);letter-spacing:-0.141px;word-spacing:0;">Rozpočtové organizace</div>
<div class="t" style="left:942.8px;top:367.6px;font-size:13px;letter-spacing:-0.24px;word-spacing:0.7px;line-height:17px;transform:scaleY(1.05);color:#8e8e8e;font-size:12px;letter-spacing:0;word-spacing:0;transform-origin:0 50%;transform:scale(0.927,1.05);">UKO</div>
<svg style="left:428.2px;top:425.6px" width="34.6" height="26.4" viewBox="0 0 34.6 26.4"><path d="M0 2Q0 0 2 0H15Q16.6 0 17.4 1.2L19.6 4.4H32.6Q34.6 4.4 34.6 6.4V9.2H0Z" fill="#1a7dfc"/><path d="M0 10.4H34.6V24.4Q34.6 26.4 32.6 26.4H2Q0 26.4 0 24.4Z" fill="#8cbcfb"/></svg>
<div class="t" style="left:469.3px;top:423.4px;font-size:13px;letter-spacing:-0.24px;word-spacing:0.7px;line-height:17px;transform:scaleY(1.05);letter-spacing:-0.818px;word-spacing:0;">Klíče</div>
<div class="t" style="left:469.4px;top:438.8px;font-size:13px;letter-spacing:-0.24px;word-spacing:0.7px;line-height:17px;transform:scaleY(1.05);color:#8e8e8e;font-size:12px;letter-spacing:0;word-spacing:0;transform-origin:0 50%;transform:scale(0.817,1.05);">CL</div>
<svg style="left:665.0px;top:425.6px" width="34.6" height="26.4" viewBox="0 0 34.6 26.4"><path d="M0 2Q0 0 2 0H15Q16.6 0 17.4 1.2L19.6 4.4H32.6Q34.6 4.4 34.6 6.4V9.2H0Z" fill="#1a7dfc"/><path d="M0 10.4H34.6V24.4Q34.6 26.4 32.6 26.4H2Q0 26.4 0 24.4Z" fill="#8cbcfb"/></svg>
<div class="t" style="left:706.1px;top:423.4px;font-size:13px;letter-spacing:-0.24px;word-spacing:0.7px;line-height:17px;transform:scaleY(1.05);letter-spacing:-0.795px;word-spacing:0;">Číselníky</div>
<div class="t" style="left:706.2px;top:438.8px;font-size:13px;letter-spacing:-0.24px;word-spacing:0.7px;line-height:17px;transform:scaleY(1.05);color:#8e8e8e;font-size:12px;letter-spacing:0;word-spacing:0;transform-origin:0 50%;transform:scale(0.888,1.05);">UKUC</div>
<svg style="left:427.3px;top:491.3px" width="38" height="37.6" viewBox="0 0 38 37.6"><path d="M7.2 17.5V2Q7.2 0.6 8.6 0.6H25.4L30.4 5.6V17.5Z" fill="#fff" stroke="#767676" stroke-width="1.15"/><path d="M25.4 0.8V5.6H30.2" fill="#fff" stroke="#767676" stroke-width="0.9"/><path d="M6.2 30V35.4Q6.2 37 7.8 37H30Q31.6 37 31.6 35.4V30Z" fill="#fff" stroke="#767676" stroke-width="1.15"/><rect x="0.5" y="16.9" width="37" height="15.5" rx="2.2" fill="#1a80fb" stroke="#8a7a78" stroke-opacity="0.55" stroke-width="0.7"/><path d="M0.6 28.9H37.4" stroke="#1f3c63" stroke-width="1.1"/><circle cx="32.5" cy="20.8" r="1.35" fill="#2a66c4" stroke="#17479a" stroke-width="1"/></svg>
<div class="t" style="left:438.90000000000003px;top:494.5px;font-size:11.5px;letter-spacing:1.7px;line-height:13px;color:#1a1a1a;-webkit-text-stroke:0.55px #1a1a1a">IQ</div>
<div class="t" style="left:469.6px;top:501.2px;font-size:13px;letter-spacing:-0.24px;word-spacing:0.7px;line-height:17px;transform:scaleY(1.05);letter-spacing:-0.066px;word-spacing:0;">IQ - účetní data (ÚD)</div>
<svg style="left:664.1px;top:491.3px" width="38" height="37.6" viewBox="0 0 38 37.6"><path d="M7.2 17.5V2Q7.2 0.6 8.6 0.6H25.4L30.4 5.6V17.5Z" fill="#fff" stroke="#767676" stroke-width="1.15"/><path d="M25.4 0.8V5.6H30.2" fill="#fff" stroke="#767676" stroke-width="0.9"/><path d="M6.2 30V35.4Q6.2 37 7.8 37H30Q31.6 37 31.6 35.4V30Z" fill="#fff" stroke="#767676" stroke-width="1.15"/><rect x="0.5" y="16.9" width="37" height="15.5" rx="2.2" fill="#1a80fb" stroke="#8a7a78" stroke-opacity="0.55" stroke-width="0.7"/><path d="M0.6 28.9H37.4" stroke="#1f3c63" stroke-width="1.1"/><circle cx="32.5" cy="20.8" r="1.35" fill="#2a66c4" stroke="#17479a" stroke-width="1"/></svg>
<div class="t" style="left:675.7px;top:494.5px;font-size:11.5px;letter-spacing:1.7px;line-height:13px;color:#1a1a1a;-webkit-text-stroke:0.55px #1a1a1a">IQ</div>
<div class="t" style="left:706.4000000000001px;top:501.2px;font-size:13px;letter-spacing:-0.24px;word-spacing:0.7px;line-height:17px;transform:scaleY(1.05);letter-spacing:-0.102px;word-spacing:0;">IQ - účetní data zaklíč.</div>
<svg style="left:900.7px;top:491.3px" width="38" height="37.6" viewBox="0 0 38 37.6"><path d="M7.2 17.5V2Q7.2 0.6 8.6 0.6H25.4L30.4 5.6V17.5Z" fill="#fff" stroke="#767676" stroke-width="1.15"/><path d="M25.4 0.8V5.6H30.2" fill="#fff" stroke="#767676" stroke-width="0.9"/><path d="M6.2 30V35.4Q6.2 37 7.8 37H30Q31.6 37 31.6 35.4V30Z" fill="#fff" stroke="#767676" stroke-width="1.15"/><rect x="0.5" y="16.9" width="37" height="15.5" rx="2.2" fill="#1a80fb" stroke="#8a7a78" stroke-opacity="0.55" stroke-width="0.7"/><path d="M0.6 28.9H37.4" stroke="#1f3c63" stroke-width="1.1"/><circle cx="32.5" cy="20.8" r="1.35" fill="#2a66c4" stroke="#17479a" stroke-width="1"/></svg>
<div class="t" style="left:912.3000000000001px;top:494.5px;font-size:11.5px;letter-spacing:1.7px;line-height:13px;color:#1a1a1a;-webkit-text-stroke:0.55px #1a1a1a">IQ</div>
<div class="t" style="left:943.0px;top:501.2px;font-size:13px;letter-spacing:-0.24px;word-spacing:0.7px;line-height:17px;transform:scaleY(1.05);letter-spacing:-0.050px;word-spacing:0;">IQ - zaúčt.a zaklíč.dokl.</div>
<svg style="left:427.3px;top:534.02px" width="38" height="37.6" viewBox="0 0 38 37.6"><path d="M7.2 17.5V2Q7.2 0.6 8.6 0.6H25.4L30.4 5.6V17.5Z" fill="#fff" stroke="#767676" stroke-width="1.15"/><path d="M25.4 0.8V5.6H30.2" fill="#fff" stroke="#767676" stroke-width="0.9"/><path d="M6.2 30V35.4Q6.2 37 7.8 37H30Q31.6 37 31.6 35.4V30Z" fill="#fff" stroke="#767676" stroke-width="1.15"/><rect x="0.5" y="16.9" width="37" height="15.5" rx="2.2" fill="#1a80fb" stroke="#8a7a78" stroke-opacity="0.55" stroke-width="0.7"/><path d="M0.6 28.9H37.4" stroke="#1f3c63" stroke-width="1.1"/><circle cx="32.5" cy="20.8" r="1.35" fill="#2a66c4" stroke="#17479a" stroke-width="1"/></svg>
<div class="t" style="left:438.90000000000003px;top:537.22px;font-size:11.5px;letter-spacing:1.7px;line-height:13px;color:#1a1a1a;-webkit-text-stroke:0.55px #1a1a1a">IQ</div>
<div class="t" style="left:469.6px;top:543.92px;font-size:13px;letter-spacing:-0.24px;word-spacing:0.7px;line-height:17px;transform:scaleY(1.05);letter-spacing:-0.090px;word-spacing:0;">IQ - zaúčtování dokladu</div>
<svg style="left:664.1px;top:534.02px" width="38" height="37.6" viewBox="0 0 38 37.6"><path d="M7.2 17.5V2Q7.2 0.6 8.6 0.6H25.4L30.4 5.6V17.5Z" fill="#fff" stroke="#767676" stroke-width="1.15"/><path d="M25.4 0.8V5.6H30.2" fill="#fff" stroke="#767676" stroke-width="0.9"/><path d="M6.2 30V35.4Q6.2 37 7.8 37H30Q31.6 37 31.6 35.4V30Z" fill="#fff" stroke="#767676" stroke-width="1.15"/><rect x="0.5" y="16.9" width="37" height="15.5" rx="2.2" fill="#1a80fb" stroke="#8a7a78" stroke-opacity="0.55" stroke-width="0.7"/><path d="M0.6 28.9H37.4" stroke="#1f3c63" stroke-width="1.1"/><circle cx="32.5" cy="20.8" r="1.35" fill="#2a66c4" stroke="#17479a" stroke-width="1"/><path d="M12.2 7.2H25.4M12.2 11H25.4M12.2 14.6H25.4" stroke="#8a8a8a" stroke-width="1.5"/></svg>
<div class="t" style="left:706.4000000000001px;top:543.92px;font-size:13px;letter-spacing:-0.24px;word-spacing:0.7px;line-height:17px;transform:scaleY(1.05);letter-spacing:-0.124px;word-spacing:0;">Nezaúčt. doklady v knize</div>
<svg style="left:900.7px;top:534.02px" width="38" height="37.6" viewBox="0 0 38 37.6"><path d="M7.2 17.5V2Q7.2 0.6 8.6 0.6H25.4L30.4 5.6V17.5Z" fill="#fff" stroke="#767676" stroke-width="1.15"/><path d="M25.4 0.8V5.6H30.2" fill="#fff" stroke="#767676" stroke-width="0.9"/><path d="M6.2 30V35.4Q6.2 37 7.8 37H30Q31.6 37 31.6 35.4V30Z" fill="#fff" stroke="#767676" stroke-width="1.15"/><rect x="0.5" y="16.9" width="37" height="15.5" rx="2.2" fill="#1a80fb" stroke="#8a7a78" stroke-opacity="0.55" stroke-width="0.7"/><path d="M0.6 28.9H37.4" stroke="#1f3c63" stroke-width="1.1"/><circle cx="32.5" cy="20.8" r="1.35" fill="#2a66c4" stroke="#17479a" stroke-width="1"/><path d="M12.2 7.2H25.4M12.2 11H25.4M12.2 14.6H25.4" stroke="#8a8a8a" stroke-width="1.5"/></svg>
<div class="t" style="left:943.0px;top:543.92px;font-size:13px;letter-spacing:-0.24px;word-spacing:0.7px;line-height:17px;transform:scaleY(1.05);letter-spacing:-0.167px;word-spacing:0;">Doklady zaúčt. a zaklíč.</div>
<svg style="left:427.3px;top:576.74px" width="38" height="37.6" viewBox="0 0 38 37.6"><path d="M7.2 17.5V2Q7.2 0.6 8.6 0.6H25.4L30.4 5.6V17.5Z" fill="#fff" stroke="#767676" stroke-width="1.15"/><path d="M25.4 0.8V5.6H30.2" fill="#fff" stroke="#767676" stroke-width="0.9"/><path d="M6.2 30V35.4Q6.2 37 7.8 37H30Q31.6 37 31.6 35.4V30Z" fill="#fff" stroke="#767676" stroke-width="1.15"/><rect x="0.5" y="16.9" width="37" height="15.5" rx="2.2" fill="#1a80fb" stroke="#8a7a78" stroke-opacity="0.55" stroke-width="0.7"/><path d="M0.6 28.9H37.4" stroke="#1f3c63" stroke-width="1.1"/><circle cx="32.5" cy="20.8" r="1.35" fill="#2a66c4" stroke="#17479a" stroke-width="1"/></svg>
<div class="t" style="left:438.90000000000003px;top:579.94px;font-size:11.5px;letter-spacing:1.7px;line-height:13px;color:#1a1a1a;-webkit-text-stroke:0.55px #1a1a1a">IQ</div>
<div class="t" style="left:469.6px;top:586.64px;font-size:13px;letter-spacing:-0.24px;word-spacing:0.7px;line-height:17px;transform:scaleY(1.05);letter-spacing:-0.059px;word-spacing:0;">IQ - saldokonto</div>
<svg style="left:664.1px;top:576.74px" width="38" height="37.6" viewBox="0 0 38 37.6"><path d="M7.2 17.5V2Q7.2 0.6 8.6 0.6H25.4L30.4 5.6V17.5Z" fill="#fff" stroke="#767676" stroke-width="1.15"/><path d="M25.4 0.8V5.6H30.2" fill="#fff" stroke="#767676" stroke-width="0.9"/><path d="M6.2 30V35.4Q6.2 37 7.8 37H30Q31.6 37 31.6 35.4V30Z" fill="#fff" stroke="#767676" stroke-width="1.15"/><rect x="0.5" y="16.9" width="37" height="15.5" rx="2.2" fill="#1a80fb" stroke="#8a7a78" stroke-opacity="0.55" stroke-width="0.7"/><path d="M0.6 28.9H37.4" stroke="#1f3c63" stroke-width="1.1"/><circle cx="32.5" cy="20.8" r="1.35" fill="#2a66c4" stroke="#17479a" stroke-width="1"/></svg>
<div class="t" style="left:675.7px;top:579.94px;font-size:11.5px;letter-spacing:1.7px;line-height:13px;color:#1a1a1a;-webkit-text-stroke:0.55px #1a1a1a">IQ</div>
<div class="t" style="left:706.4000000000001px;top:586.64px;font-size:13px;letter-spacing:-0.24px;word-spacing:0.7px;line-height:17px;transform:scaleY(1.05);letter-spacing:-0.001px;word-spacing:0;">IQ - účto x saldo</div>
<svg style="left:900.7px;top:576.74px" width="38" height="37.6" viewBox="0 0 38 37.6"><path d="M7.2 17.5V2Q7.2 0.6 8.6 0.6H25.4L30.4 5.6V17.5Z" fill="#fff" stroke="#767676" stroke-width="1.15"/><path d="M25.4 0.8V5.6H30.2" fill="#fff" stroke="#767676" stroke-width="0.9"/><path d="M6.2 30V35.4Q6.2 37 7.8 37H30Q31.6 37 31.6 35.4V30Z" fill="#fff" stroke="#767676" stroke-width="1.15"/><rect x="0.5" y="16.9" width="37" height="15.5" rx="2.2" fill="#1a80fb" stroke="#8a7a78" stroke-opacity="0.55" stroke-width="0.7"/><path d="M0.6 28.9H37.4" stroke="#1f3c63" stroke-width="1.1"/><circle cx="32.5" cy="20.8" r="1.35" fill="#2a66c4" stroke="#17479a" stroke-width="1"/><path d="M12.2 7.2H25.4M12.2 11H25.4M12.2 14.6H25.4" stroke="#8a8a8a" stroke-width="1.5"/></svg>
<div class="t" style="left:943.0px;top:586.64px;font-size:13px;letter-spacing:-0.24px;word-spacing:0.7px;line-height:17px;transform:scaleY(1.05);letter-spacing:-0.155px;word-spacing:0;">Nepoužité zálohy v knize</div>
<svg style="left:427.3px;top:619.46px" width="38" height="37.6" viewBox="0 0 38 37.6"><path d="M7.2 17.5V2Q7.2 0.6 8.6 0.6H25.4L30.4 5.6V17.5Z" fill="#fff" stroke="#767676" stroke-width="1.15"/><path d="M25.4 0.8V5.6H30.2" fill="#fff" stroke="#767676" stroke-width="0.9"/><path d="M6.2 30V35.4Q6.2 37 7.8 37H30Q31.6 37 31.6 35.4V30Z" fill="#fff" stroke="#767676" stroke-width="1.15"/><rect x="0.5" y="16.9" width="37" height="15.5" rx="2.2" fill="#1a80fb" stroke="#8a7a78" stroke-opacity="0.55" stroke-width="0.7"/><path d="M0.6 28.9H37.4" stroke="#1f3c63" stroke-width="1.1"/><circle cx="32.5" cy="20.8" r="1.35" fill="#2a66c4" stroke="#17479a" stroke-width="1"/></svg>
<div class="t" style="left:438.90000000000003px;top:622.6600000000001px;font-size:11.5px;letter-spacing:1.7px;line-height:13px;color:#1a1a1a;-webkit-text-stroke:0.55px #1a1a1a">IQ</div>
<div class="t" style="left:469.6px;top:629.36px;font-size:13px;letter-spacing:-0.24px;word-spacing:0.7px;line-height:17px;transform:scaleY(1.05);letter-spacing:-0.106px;word-spacing:0;">IQ - realizace</div>
<svg style="left:664.1px;top:619.46px" width="38" height="37.6" viewBox="0 0 38 37.6"><path d="M7.2 17.5V2Q7.2 0.6 8.6 0.6H25.4L30.4 5.6V17.5Z" fill="#fff" stroke="#767676" stroke-width="1.15"/><path d="M25.4 0.8V5.6H30.2" fill="#fff" stroke="#767676" stroke-width="0.9"/><path d="M6.2 30V35.4Q6.2 37 7.8 37H30Q31.6 37 31.6 35.4V30Z" fill="#fff" stroke="#767676" stroke-width="1.15"/><rect x="0.5" y="16.9" width="37" height="15.5" rx="2.2" fill="#1a80fb" stroke="#8a7a78" stroke-opacity="0.55" stroke-width="0.7"/><path d="M0.6 28.9H37.4" stroke="#1f3c63" stroke-width="1.1"/><circle cx="32.5" cy="20.8" r="1.35" fill="#2a66c4" stroke="#17479a" stroke-width="1"/></svg>
<div class="t" style="left:675.7px;top:622.6600000000001px;font-size:11.5px;letter-spacing:1.7px;line-height:13px;color:#1a1a1a;-webkit-text-stroke:0.55px #1a1a1a">IQ</div>
<div class="t" style="left:706.4000000000001px;top:629.36px;font-size:13px;letter-spacing:-0.24px;word-spacing:0.7px;line-height:17px;transform:scaleY(1.05);letter-spacing:-0.061px;word-spacing:0;">IQ - naturální ukazatele</div>
<svg style="left:900.7px;top:619.46px" width="38" height="37.6" viewBox="0 0 38 37.6"><path d="M7.2 17.5V2Q7.2 0.6 8.6 0.6H25.4L30.4 5.6V17.5Z" fill="#fff" stroke="#767676" stroke-width="1.15"/><path d="M25.4 0.8V5.6H30.2" fill="#fff" stroke="#767676" stroke-width="0.9"/><path d="M6.2 30V35.4Q6.2 37 7.8 37H30Q31.6 37 31.6 35.4V30Z" fill="#fff" stroke="#767676" stroke-width="1.15"/><rect x="0.5" y="16.9" width="37" height="15.5" rx="2.2" fill="#1a80fb" stroke="#8a7a78" stroke-opacity="0.55" stroke-width="0.7"/><path d="M0.6 28.9H37.4" stroke="#1f3c63" stroke-width="1.1"/><circle cx="32.5" cy="20.8" r="1.35" fill="#2a66c4" stroke="#17479a" stroke-width="1"/></svg>
<div class="t" style="left:912.3000000000001px;top:622.6600000000001px;font-size:11.5px;letter-spacing:1.7px;line-height:13px;color:#1a1a1a;-webkit-text-stroke:0.55px #1a1a1a">IQ</div>
<div class="t" style="left:943.0px;top:629.36px;font-size:13px;letter-spacing:-0.24px;word-spacing:0.7px;line-height:17px;transform:scaleY(1.05);letter-spacing:0.174px;word-spacing:0;">IQ - oprav.pol.pohled.</div>
<svg style="left:427.3px;top:662.1800000000001px" width="38" height="37.6" viewBox="0 0 38 37.6"><path d="M7.2 17.5V2Q7.2 0.6 8.6 0.6H25.4L30.4 5.6V17.5Z" fill="#fff" stroke="#767676" stroke-width="1.15"/><path d="M25.4 0.8V5.6H30.2" fill="#fff" stroke="#767676" stroke-width="0.9"/><path d="M6.2 30V35.4Q6.2 37 7.8 37H30Q31.6 37 31.6 35.4V30Z" fill="#fff" stroke="#767676" stroke-width="1.15"/><rect x="0.5" y="16.9" width="37" height="15.5" rx="2.2" fill="#1a80fb" stroke="#8a7a78" stroke-opacity="0.55" stroke-width="0.7"/><path d="M0.6 28.9H37.4" stroke="#1f3c63" stroke-width="1.1"/><circle cx="32.5" cy="20.8" r="1.35" fill="#2a66c4" stroke="#17479a" stroke-width="1"/></svg>
<div class="t" style="left:438.90000000000003px;top:665.3800000000001px;font-size:11.5px;letter-spacing:1.7px;line-height:13px;color:#1a1a1a;-webkit-text-stroke:0.55px #1a1a1a">IQ</div>
<div class="t" style="left:469.6px;top:672.08px;font-size:13px;letter-spacing:-0.24px;word-spacing:0.7px;line-height:17px;transform:scaleY(1.05);letter-spacing:0.218px;word-spacing:0;">IQ - vnitrofaktury, vnitr</div>
<svg style="left:664.1px;top:662.1800000000001px" width="38" height="37.6" viewBox="0 0 38 37.6"><path d="M7.2 17.5V2Q7.2 0.6 8.6 0.6H25.4L30.4 5.6V17.5Z" fill="#fff" stroke="#767676" stroke-width="1.15"/><path d="M25.4 0.8V5.6H30.2" fill="#fff" stroke="#767676" stroke-width="0.9"/><path d="M6.2 30V35.4Q6.2 37 7.8 37H30Q31.6 37 31.6 35.4V30Z" fill="#fff" stroke="#767676" stroke-width="1.15"/><rect x="0.5" y="16.9" width="37" height="15.5" rx="2.2" fill="#1a80fb" stroke="#8a7a78" stroke-opacity="0.55" stroke-width="0.7"/><path d="M0.6 28.9H37.4" stroke="#1f3c63" stroke-width="1.1"/><circle cx="32.5" cy="20.8" r="1.35" fill="#2a66c4" stroke="#17479a" stroke-width="1"/></svg>
<div class="t" style="left:675.7px;top:665.3800000000001px;font-size:11.5px;letter-spacing:1.7px;line-height:13px;color:#1a1a1a;-webkit-text-stroke:0.55px #1a1a1a">IQ</div>
<div class="t" style="left:706.4000000000001px;top:672.08px;font-size:13px;letter-spacing:-0.24px;word-spacing:0.7px;line-height:17px;transform:scaleY(1.05);letter-spacing:0.015px;word-spacing:0;">IQ - vypořádání</div>
<svg style="left:900.7px;top:662.1800000000001px" width="38" height="37.6" viewBox="0 0 38 37.6"><path d="M7.2 17.5V2Q7.2 0.6 8.6 0.6H25.4L30.4 5.6V17.5Z" fill="#fff" stroke="#767676" stroke-width="1.15"/><path d="M25.4 0.8V5.6H30.2" fill="#fff" stroke="#767676" stroke-width="0.9"/><path d="M6.2 30V35.4Q6.2 37 7.8 37H30Q31.6 37 31.6 35.4V30Z" fill="#fff" stroke="#767676" stroke-width="1.15"/><rect x="0.5" y="16.9" width="37" height="15.5" rx="2.2" fill="#1a80fb" stroke="#8a7a78" stroke-opacity="0.55" stroke-width="0.7"/><path d="M0.6 28.9H37.4" stroke="#1f3c63" stroke-width="1.1"/><circle cx="32.5" cy="20.8" r="1.35" fill="#2a66c4" stroke="#17479a" stroke-width="1"/><path d="M12.2 7.2H25.4M12.2 11H25.4M12.2 14.6H25.4" stroke="#8a8a8a" stroke-width="1.5"/></svg>
<div class="t" style="left:943.0px;top:672.08px;font-size:13px;letter-spacing:-0.24px;word-spacing:0.7px;line-height:17px;transform:scaleY(1.05);letter-spacing:-0.105px;word-spacing:0;">Kontrola okruhu účtování</div>
<div class="a" style="left:131px;top:708px;width:1044.3px;height:86.4px;background:#a0a0a0;border:1px solid #8a8f98;border-bottom:none"></div>
<div class="a" style="left:131px;top:794.2px;width:42.4px;height:24px;background:#fff;border:1px solid #dcdcdc;border-top:none"></div>
<div class="t" style="left:140.2px;top:798px;font-weight:bold;font-size:13.4px;letter-spacing:-0.2px;line-height:17px">Vše</div>
<div class="a" style="left:5px;top:822.2px;width:1168px;height:1.2px;background:#d9d9d9;"></div>
<div class="a" style="left:743.6px;top:824.4px;width:1px;height:19px;background:#d4d4d4;"></div>
<div class="a" style="left:921.2px;top:824.4px;width:1px;height:19px;background:#d4d4d4;"></div>
<div class="a" style="left:1040.4px;top:824.4px;width:1px;height:19px;background:#d4d4d4;"></div>
<svg style="left:5.2px;top:824.5px" width="20" height="20" viewBox="0 0 20 20"><circle cx="9.6" cy="9.8" r="9" fill="#fff" stroke="#a6d0fa" stroke-width="1.3"/><rect x="8.6" y="8.4" width="2.1" height="6.2" fill="#1a5fd0"/><circle cx="9.65" cy="5.9" r="1.25" fill="#1a5fd0"/></svg>
<svg style="left:745.6px;top:825px" width="20" height="20" viewBox="0 0 20 20"><circle cx="9.6" cy="9.6" r="8.6" fill="#b9dbfc" stroke="#3b86e8" stroke-width="1.4"/><circle cx="9.6" cy="6.6" r="2.7" fill="#e8f3fe" stroke="#2f78e0" stroke-width="1.3"/><path d="M5.6 16.4V13.4Q5.6 11 8 11H11.2Q13.6 11 13.6 13.4V16.4" fill="#8ec3fb" stroke="#2f78e0" stroke-width="1.3"/></svg>
<div class="t" style="left:768.2px;top:825.7px;font-size:14px;line-height:17px;transform:scaleY(1.07);letter-spacing:-0.740px;word-spacing:0;">okfas</div>
<div class="t" style="left:928.2px;top:825.7px;font-size:14px;line-height:17px;transform:scaleY(1.07);letter-spacing:-0.621px;word-spacing:0;">Lic: 9999_cloud</div>
<div class="t" style="left:1048.4px;top:825.7px;font-size:14px;line-height:17px;transform:scaleY(1.07);letter-spacing:-0.354px;word-spacing:0;">3.3.18.39b</div>
<div class="a" style="left:1134.2px;top:825px;width:19.4px;height:19.4px;border-radius:50%;background:linear-gradient(#2b6bd8,#3f8cc4 50%,#4ba246);"></div>
<div class="a" style="left:1135.7px;top:826.5px;width:16.4px;height:16.4px;border-radius:50%;background:linear-gradient(#cfe6fb,#dff1f6 55%,#d9f0d4);"></div>
<svg style="left:1134px;top:824.8px" width="20" height="20" viewBox="0 0 20 20"><g fill="none" stroke-width="1.15"><path d="M9.9 1V9.9M1.2 9.9H18.6" stroke="#3b86c8"/><path d="M9.9 9.9V18.8" stroke="#48a04c"/><path d="M5.5 9.9A4.4 9 0 0 1 14.3 9.9" stroke="#2f70d4"/><path d="M5.5 9.9A4.4 9 0 0 0 14.3 9.9" stroke="#48a04c"/><path d="M2.6 5.3H17.2" stroke="#2f70d4"/><path d="M2.6 14.5H17.2" stroke="#48a04c"/></g></svg>
<svg style="left:1163px;top:831px" width="14" height="14" viewBox="0 0 14 14"><path d="M13.6 2L2 13.6M13.6 6L6 13.6M13.6 10L10 13.6" stroke="#b0b0b0" stroke-width="1.2"/></svg>
</body></html>
